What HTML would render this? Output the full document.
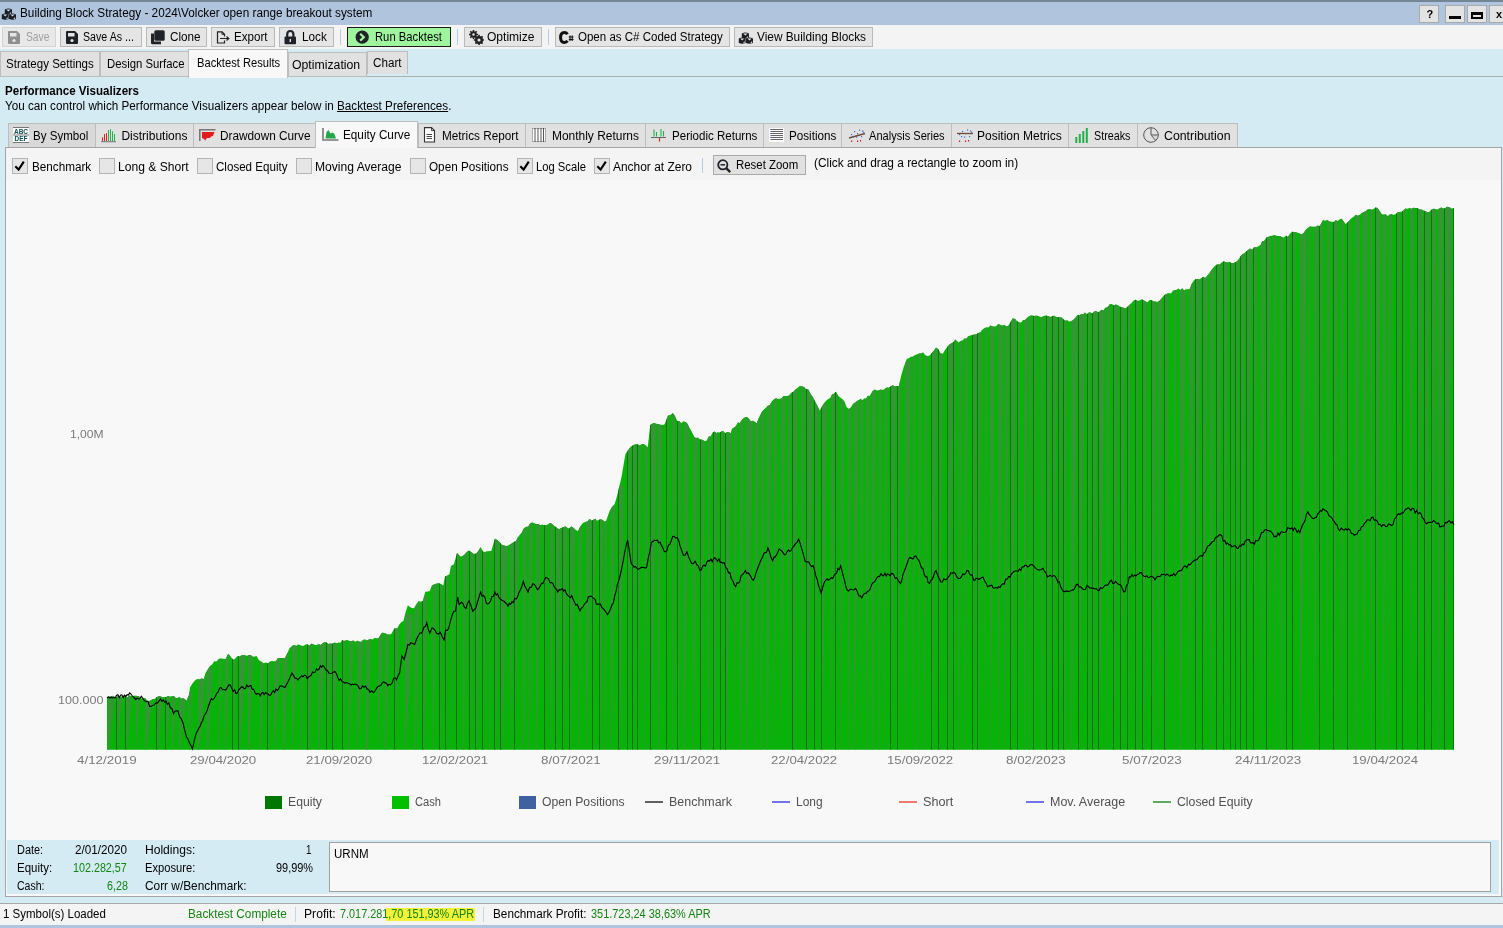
<!DOCTYPE html>
<html><head><meta charset="utf-8">
<style>
*{box-sizing:border-box}
html,body{margin:0;padding:0}
body{width:1503px;height:928px;overflow:hidden;position:relative;background:#d5ebf4;font-family:"Liberation Sans", sans-serif;font-size:12px;color:#000}
.a{position:absolute}
.t{position:absolute;white-space:pre;line-height:1;transform-origin:0 0}
#root{position:absolute;left:0;top:0;width:1503px;height:928px;will-change:transform}
.btn{position:absolute;background:#e5e5e5;border:1px solid #b9b9b9}
.tab{position:absolute;background:#e1e1e1;border:1px solid #bdbdbd;border-bottom:none}
.cb{position:absolute;width:16px;height:16px;background:#e6e6e6;border:1px solid #b4b4b4}
.sep{position:absolute;width:1px;background:#b8cde4}
svg{position:absolute;overflow:visible}
</style></head><body><div id="root">

<div class="a" style="left:0;top:0;width:1503px;height:2px;background:#748596"></div>
<div class="a" style="left:0;top:2px;width:1503px;height:23px;background:#b0c4de"></div>
<svg style="left:1px;top:7px" width="16" height="14"><path d="M3.8 2.4 Q7.4 0.7999999999999999 11.0 2.4 V6.7 Q7.4 8.1 3.8 6.7Z" fill="#1c1e22"/><path d="M5.199999999999999 2.5 H9.6 L7.4 4.5Z" fill="#c8daf0"/><path d="M8.4 6.5 L10.1 5.1 V6.4 L9.3 7.3Z" fill="#c8daf0"/><path d="M0.8 7.4 Q4.2 5.8 7.6 7.4 V12.0 Q4.2 13.4 0.8 12.0Z" fill="#1c1e22"/><path d="M2.2 7.5 H6.199999999999999 L4.2 9.5Z" fill="#c8daf0"/><path d="M5.2 11.8 L6.699999999999999 10.1 V11.4 L6.1 12.6Z" fill="#c8daf0"/><path d="M8 7.4 Q11.5 5.8 15 7.4 V12.0 Q11.5 13.4 8 12.0Z" fill="#1c1e22"/><path d="M9.4 7.5 H13.6 L11.5 9.5Z" fill="#c8daf0"/><path d="M12.5 11.8 L14.1 10.1 V11.4 L13.4 12.6Z" fill="#c8daf0"/></svg>
<div class="t" style="left:20.00px;top:7.14px;font-size:12px;transform:scaleX(0.9817);">Building Block Strategy - 2024\Volcker open range breakout system</div>
<div class="btn" style="left:1419px;top:5px;width:20px;height:18px;border-color:#a9a9a9;background:#e3e3e3"></div>
<div class="btn" style="left:1445px;top:5px;width:20px;height:18px;border-color:#a9a9a9;background:#e3e3e3"></div>
<div class="btn" style="left:1467px;top:5px;width:20px;height:18px;border-color:#a9a9a9;background:#e3e3e3"></div>
<div class="btn" style="left:1489px;top:5px;width:20px;height:18px;border-color:#a9a9a9;background:#e3e3e3"></div>
<div class="t" style="left:1426.50px;top:8.69px;font-size:11px;font-weight:bold;">?</div>
<div class="a" style="left:1449px;top:16px;width:12px;height:3px;background:#000"></div>
<div class="a" style="left:1471px;top:12px;width:12px;height:7px;border:solid #000;border-width:3px 2px 2px 2px"></div>
<div class="t" style="left:1496.00px;top:9.19px;font-size:11px;font-weight:bold;">x</div>
<div class="a" style="left:0;top:25px;width:1503px;height:24px;background:#f4f4f4"></div>
<div class="btn" style="left:2px;top:27px;width:54px;height:20px;background:#e8e8e8;border-color:#d4d4d4;"></div>
<div class="t" style="left:25.50px;top:30.94px;font-size:12px;color:#a0a0a0;transform:scaleX(0.8553);">Save</div>
<div class="btn" style="left:60px;top:27px;width:82px;height:20px;"></div>
<div class="t" style="left:83.20px;top:30.94px;font-size:12px;transform:scaleX(0.8871);">Save As ...</div>
<div class="btn" style="left:146px;top:27px;width:61px;height:20px;"></div>
<div class="t" style="left:169.60px;top:30.94px;font-size:12px;transform:scaleX(0.9758);">Clone</div>
<div class="btn" style="left:211px;top:27px;width:64px;height:20px;"></div>
<div class="t" style="left:234.30px;top:30.94px;font-size:12px;transform:scaleX(0.9658);">Export</div>
<div class="btn" style="left:279px;top:27px;width:55px;height:20px;"></div>
<div class="t" style="left:302.40px;top:30.94px;font-size:12px;transform:scaleX(0.9779);">Lock</div>
<div class="btn" style="left:347px;top:27px;width:104px;height:20px;background:#9ef59e;border-color:#1a1a1a;"></div>
<div class="t" style="left:374.60px;top:30.94px;font-size:12px;transform:scaleX(0.9373);">Run Backtest</div>
<div class="btn" style="left:464px;top:27px;width:78px;height:20px;"></div>
<div class="t" style="left:487.40px;top:30.94px;font-size:12px;transform:scaleX(1.0033);">Optimize</div>
<div class="btn" style="left:555px;top:27px;width:175px;height:20px;"></div>
<div class="t" style="left:578.00px;top:30.94px;font-size:12px;transform:scaleX(0.9604);">Open as C# Coded Strategy</div>
<div class="btn" style="left:734px;top:27px;width:139px;height:20px;"></div>
<div class="t" style="left:756.90px;top:30.94px;font-size:12px;transform:scaleX(0.9863);">View Building Blocks</div>
<div class="sep" style="left:340px;top:29px;height:16px"></div>
<div class="sep" style="left:457px;top:29px;height:16px"></div>
<div class="sep" style="left:548px;top:29px;height:16px"></div>
<svg style="left:8px;top:31px" width="12" height="13" viewBox="0 0 12 13"><path d="M1 0 H9 L12 3 V12 Q12 13 11 13 H1 Q0 13 0 12 V1 Q0 0 1 0Z" fill="#8f8f8f"/><rect x="2" y="2" width="6.5" height="3.5" fill="#e5e5e5"/><circle cx="6" cy="9.5" r="1.6" fill="#e5e5e5"/></svg>
<svg style="left:66px;top:31px" width="12" height="13" viewBox="0 0 12 13"><path d="M1 0 H9 L12 3 V12 Q12 13 11 13 H1 Q0 13 0 12 V1 Q0 0 1 0Z" fill="#1f2228"/><rect x="2" y="2" width="6.5" height="3.5" fill="#e5e5e5"/><circle cx="6" cy="9.5" r="1.6" fill="#e5e5e5"/></svg>
<svg style="left:151px;top:30px" width="14" height="15"><rect x="3.3" y="0.3" width="10.4" height="10.4" rx="1.5" fill="#1f2228"/><path d="M0 3.5 H3 V11.5 H10 V14.3 H1.5 Q0 14.3 0 12.8Z" fill="#1f2228"/></svg>
<svg style="left:216px;top:31px" width="15" height="13"><path d="M8.5 5.5 V3.3 L6 0.8 H1.5 V12 H8.5 V9.5" fill="none" stroke="#222" stroke-width="1.2"/><path d="M6 0.8 V3.3 H8.5" fill="none" stroke="#222" stroke-width="1"/><path d="M4 7.5 H12.5 M10.5 5.5 L12.8 7.5 L10.5 9.5" fill="none" stroke="#222" stroke-width="1.2"/></svg>
<svg style="left:284px;top:30px" width="13" height="15"><path d="M3.2 7 V4.5 Q3.2 1 6.3 1 Q9.4 1 9.4 4.5 V7" fill="none" stroke="#1f2228" stroke-width="2.2"/><rect x="0.5" y="6.5" width="11.5" height="7.8" rx="1" fill="#1f2228"/><rect x="5.6" y="9" width="1.4" height="3" fill="#e5e5e5"/></svg>
<svg style="left:355px;top:30px" width="15" height="15"><circle cx="7.2" cy="7.2" r="6.6" fill="#1f2228"/><path d="M5.2 3.8 L8.8 7.2 L5.2 10.6" fill="none" stroke="#9ef59e" stroke-width="2.2"/></svg>
<svg style="left:469px;top:30px" width="15" height="15" viewBox="0 0 15 15"><g fill="#222"><circle cx="4.5" cy="4.5" r="3.2"/><circle cx="10" cy="10" r="4"/></g><g stroke="#222" stroke-width="1.6"><path d="M4.5 0 V9 M0 4.5 H9 M1.3 1.3 L7.7 7.7 M7.7 1.3 L1.3 7.7"/><path d="M10 4.8 V15 M4.8 10 H15 M6.4 6.4 L13.6 13.6 M13.6 6.4 L6.4 13.6"/></g><circle cx="4.5" cy="4.5" r="1.2" fill="#e5e5e5"/><circle cx="10" cy="10" r="1.6" fill="#e5e5e5"/></svg>
<svg style="left:559px;top:31px" width="16" height="13"><path d="M8.5 3.2 Q7.5 1.5 5.2 1.5 Q1.6 1.5 1.6 6.5 Q1.6 11.5 5.2 11.5 Q7.5 11.5 8.5 9.8" fill="none" stroke="#111" stroke-width="3"/><path d="M11 4.5 V10 M13.2 4.5 V10 M9.8 6 H14.5 M9.8 8.5 H14.5" stroke="#111" stroke-width="1.1"/></svg>
<svg style="left:738px;top:31px" width="16" height="14"><path d="M3.8 2.4 Q7.4 0.7999999999999999 11.0 2.4 V6.7 Q7.4 8.1 3.8 6.7Z" fill="#1c1e22"/><path d="M5.199999999999999 2.5 H9.6 L7.4 4.5Z" fill="#e5e5e5"/><path d="M8.4 6.5 L10.1 5.1 V6.4 L9.3 7.3Z" fill="#e5e5e5"/><path d="M0.8 7.4 Q4.2 5.8 7.6 7.4 V12.0 Q4.2 13.4 0.8 12.0Z" fill="#1c1e22"/><path d="M2.2 7.5 H6.199999999999999 L4.2 9.5Z" fill="#e5e5e5"/><path d="M5.2 11.8 L6.699999999999999 10.1 V11.4 L6.1 12.6Z" fill="#e5e5e5"/><path d="M8 7.4 Q11.5 5.8 15 7.4 V12.0 Q11.5 13.4 8 12.0Z" fill="#1c1e22"/><path d="M9.4 7.5 H13.6 L11.5 9.5Z" fill="#e5e5e5"/><path d="M12.5 11.8 L14.1 10.1 V11.4 L13.4 12.6Z" fill="#e5e5e5"/></svg>
<div class="a" style="left:0;top:76px;width:1503px;height:1px;background:#b0b0b0"></div>
<div class="tab" style="left:0;top:51px;width:100px;height:26px;border-bottom:1px solid #bdbdbd"></div>
<div class="t" style="left:6.00px;top:57.84px;font-size:12px;transform:scaleX(0.9607);">Strategy Settings</div>
<div class="tab" style="left:100px;top:51px;width:89px;height:26px;border-bottom:1px solid #bdbdbd"></div>
<div class="t" style="left:106.50px;top:57.84px;font-size:12px;transform:scaleX(0.9446);">Design Surface</div>
<div class="tab" style="left:288px;top:52px;width:79px;height:25px;border-bottom:1px solid #bdbdbd"></div>
<div class="t" style="left:292.20px;top:59.34px;font-size:12px;transform:scaleX(1.0224);">Optimization</div>
<div class="tab" style="left:367px;top:51px;width:41px;height:23px"></div>
<div class="t" style="left:373.20px;top:57.34px;font-size:12px;transform:scaleX(0.9712);">Chart</div>
<div class="tab" style="left:188px;top:49px;width:100px;height:29px;background:#f8f8f8;border-color:#bdbdbd"></div>
<div class="t" style="left:196.50px;top:56.84px;font-size:12px;transform:scaleX(0.9309);">Backtest Results</div>
<div class="t" style="left:5.00px;top:85.34px;font-size:12px;font-weight:bold;transform:scaleX(0.9627);">Performance Visualizers</div>
<div class="t" style="left:5.00px;top:99.74px;font-size:12px;transform:scaleX(0.9741);">You can control which Performance Visualizers appear below in <span style="text-decoration:underline">Backtest Preferences</span>.</div>
<div class="a" style="left:5px;top:147px;width:1497px;height:750px;background:#f8f8f8;border:1px solid #a5a5a5"></div>
<div class="a" style="left:6px;top:148px;width:1495px;height:32px;background:#f4f4f4"></div>
<div class="tab" style="left:8px;top:123px;width:88px;height:24px;background:#d9d9d9"></div>
<div class="t" style="left:33.40px;top:129.54px;font-size:12px;transform:scaleX(0.9624);">By Symbol</div>
<div class="tab" style="left:95px;top:123px;width:99px;height:24px;background:#e1e1e1"></div>
<div class="t" style="left:121.40px;top:129.54px;font-size:12px;">Distributions</div>
<div class="tab" style="left:193px;top:123px;width:123px;height:24px;background:#e1e1e1"></div>
<div class="t" style="left:220.40px;top:129.54px;font-size:12px;transform:scaleX(0.9832);">Drawdown Curve</div>
<div class="tab" style="left:315px;top:121px;width:103px;height:27px;background:#f8f8f8"></div>
<div class="t" style="left:342.60px;top:128.54px;font-size:12px;transform:scaleX(0.9781);">Equity Curve</div>
<div class="tab" style="left:418px;top:123px;width:108px;height:24px;background:#e1e1e1"></div>
<div class="t" style="left:442.20px;top:129.54px;font-size:12px;transform:scaleX(0.9804);">Metrics Report</div>
<div class="tab" style="left:525px;top:123px;width:121px;height:24px;background:#e1e1e1"></div>
<div class="t" style="left:551.60px;top:129.54px;font-size:12px;transform:scaleX(0.9957);">Monthly Returns</div>
<div class="tab" style="left:645px;top:123px;width:119px;height:24px;background:#e1e1e1"></div>
<div class="t" style="left:671.50px;top:129.54px;font-size:12px;transform:scaleX(0.9626);">Periodic Returns</div>
<div class="tab" style="left:763px;top:123px;width:79px;height:24px;background:#e1e1e1"></div>
<div class="t" style="left:789.30px;top:129.54px;font-size:12px;transform:scaleX(0.9712);">Positions</div>
<div class="tab" style="left:841px;top:123px;width:111px;height:24px;background:#e1e1e1"></div>
<div class="t" style="left:869.40px;top:129.54px;font-size:12px;transform:scaleX(0.9216);">Analysis Series</div>
<div class="tab" style="left:951px;top:123px;width:118px;height:24px;background:#e1e1e1"></div>
<div class="t" style="left:977.00px;top:129.54px;font-size:12px;">Position Metrics</div>
<div class="tab" style="left:1068px;top:123px;width:70px;height:24px;background:#e1e1e1"></div>
<div class="t" style="left:1094.20px;top:129.54px;font-size:12px;transform:scaleX(0.8946);">Streaks</div>
<div class="tab" style="left:1137px;top:123px;width:101px;height:24px;background:#e1e1e1"></div>
<div class="t" style="left:1163.70px;top:129.54px;font-size:12px;transform:scaleX(1.0275);">Contribution</div>
<svg style="left:13px;top:127px" width="16" height="16"><rect x="0" y="0" width="16" height="16" fill="#fff"/><path d="M0 0.5 H16 M0 8 H16 M0 15.5 H16" stroke="#777" stroke-width="1"/><text x="8" y="7" font-family="Liberation Sans" font-size="6.5" font-weight="bold" fill="#0b4f4f" text-anchor="middle">ABC</text><text x="8" y="14" font-family="Liberation Sans" font-size="6.5" font-weight="bold" fill="#0b4f4f" text-anchor="middle">DEF</text></svg>
<svg style="left:101px;top:128px" width="16" height="15"><g fill="#e32020"><rect x="1" y="9.2" width="1" height="4"/><rect x="3" y="6" width="1" height="7.2"/><rect x="5" y="5.2" width="1" height="8"/></g><g fill="#1db34a"><rect x="7" y="2" width="1" height="11.2"/><rect x="9" y="1.2" width="1" height="12"/><rect x="11" y="3.2" width="1" height="10"/><rect x="13" y="6" width="1" height="7.2"/></g><rect x="0" y="13.3" width="15" height="0.9" fill="#666"/></svg>
<svg style="left:199px;top:129px" width="17" height="12"><path d="M0.8 12 V0.8 H16.5" fill="none" stroke="#777" stroke-width="1.6"/><path d="M3 3 H15.5 L14 7 L12 7.5 L11 9 L8 9 L6 11.5 L5 10 L3 9Z" fill="#e41b1b"/></svg>
<svg style="left:322px;top:128px" width="17" height="13"><path d="M1 0 V12 H16.5" fill="none" stroke="#777" stroke-width="1.6"/><path d="M3.5 10.5 L4.5 4 L6.5 2 L8.5 5.5 L10.5 4.5 L12.5 6 L14 10.5Z" fill="#22a84a"/></svg>
<svg style="left:423px;top:127px" width="13" height="16"><path d="M1.5 0.6 H8.5 L11.5 3.6 V15 H1.5Z" fill="#fff" stroke="#333" stroke-width="1.1"/><path d="M8.5 0.6 V3.6 H11.5" fill="none" stroke="#333" stroke-width="0.9"/><path d="M3.5 7.5 H9 M3.5 9.5 H9 M3.5 11.5 H9" stroke="#333" stroke-width="0.9"/></svg>
<svg style="left:532px;top:128px" width="14" height="14"><rect x="0.5" y="0.5" width="13" height="13" fill="#fff" stroke="#999" stroke-width="0.8"/><path d="M3 0 V14 M6 0 V14 M9 0 V14 M11.5 0 V14" stroke="#444" stroke-width="0.9"/></svg>
<svg style="left:651px;top:128px" width="15" height="14"><path d="M3 1.5 V8.5 M5.5 4 V8.5 M10 1 V8.5 M12.5 3 V8.5" stroke="#1db34a" stroke-width="1.1"/><path d="M0 9.5 H15" stroke="#666" stroke-width="1"/><path d="M8.5 10 V13.5" stroke="#e01f1f" stroke-width="1.2"/></svg>
<svg style="left:769px;top:128px" width="15" height="14"><rect x="0" y="0" width="15" height="14" fill="#fff"/><path d="M1.5 1.5 H14 M1.5 3.5 H14 M1.5 5.5 H14 M1.5 7.5 H14 M1.5 9.5 H14 M1.5 11.5 H14" stroke="#555" stroke-width="0.9"/><path d="M1.5 1.5 H2.5 M1.5 5.5 H2.5 M1.5 9.5 H2.5" stroke="#3355ff" stroke-width="1"/></svg>
<svg style="left:849px;top:127.5px" width="17" height="15"><rect x="2" y="6" width="1.2" height="1.2" fill="#3a70c8"/><rect x="5" y="3" width="1.2" height="1.2" fill="#3a70c8"/><rect x="8" y="5" width="1.2" height="1.2" fill="#3a70c8"/><rect x="10" y="1.5" width="1.2" height="1.2" fill="#3a70c8"/><rect x="13" y="2.5" width="1.2" height="1.2" fill="#3a70c8"/><rect x="7" y="8.5" width="1.2" height="1.2" fill="#3a70c8"/><rect x="12" y="8" width="1.2" height="1.2" fill="#3a70c8"/><rect x="14" y="3.5" width="1.2" height="1.2" fill="#3a70c8"/><rect x="4" y="8" width="1.2" height="1.2" fill="#3a70c8"/><path d="M0 10 L16 5.5" stroke="#6e4a3a" stroke-width="1.3"/><rect x="2" y="12.5" width="1.2" height="1.5" fill="#c01f2f"/><rect x="8" y="12.5" width="1.2" height="1.5" fill="#c01f2f"/><rect x="11" y="12" width="1.2" height="1.5" fill="#c01f2f"/></svg>
<svg style="left:957px;top:127.5px" width="17" height="15"><rect x="2" y="6" width="1.2" height="1.2" fill="#3a70c8"/><rect x="5" y="3" width="1.2" height="1.2" fill="#3a70c8"/><rect x="8" y="5" width="1.2" height="1.2" fill="#3a70c8"/><rect x="10" y="1.5" width="1.2" height="1.2" fill="#3a70c8"/><rect x="13" y="2.5" width="1.2" height="1.2" fill="#3a70c8"/><rect x="7" y="8.5" width="1.2" height="1.2" fill="#3a70c8"/><rect x="12" y="8" width="1.2" height="1.2" fill="#3a70c8"/><rect x="14" y="3.5" width="1.2" height="1.2" fill="#3a70c8"/><rect x="4" y="8" width="1.2" height="1.2" fill="#3a70c8"/><path d="M0 5.5 H16" stroke="#6e4a3a" stroke-width="1.3"/><rect x="2" y="12.5" width="1.2" height="1.5" fill="#c01f2f"/><rect x="8" y="12.5" width="1.2" height="1.5" fill="#c01f2f"/><rect x="11" y="12" width="1.2" height="1.5" fill="#c01f2f"/></svg>
<svg style="left:1075px;top:128px" width="14" height="15"><path d="M1.3 15 V9 M4.8 15 V6 M8.3 15 V3 M11.8 15 V0" stroke="#22b04a" stroke-width="2"/></svg>
<svg style="left:1143px;top:127px" width="17" height="16"><circle cx="8" cy="8" r="7.3" fill="none" stroke="#555" stroke-width="1"/><path d="M8 0.7 V8 H15.3 M8 8 L12.8 13.6" fill="none" stroke="#555" stroke-width="1"/><path d="M8.5 8.5 H15" stroke="#999" stroke-width="1.4"/></svg>
<div class="cb" style="left:12px;top:158px"></div>
<svg style="left:12px;top:158px" width="16" height="16"><path d="M3.3 8.3 L6.6 11.6 L11.8 3.6" stroke="#000" stroke-width="2.1" fill="none"/></svg>
<div class="t" style="left:31.60px;top:161.34px;font-size:12px;transform:scaleX(0.9752);">Benchmark</div>
<div class="cb" style="left:99px;top:158px"></div>
<div class="t" style="left:118.00px;top:161.34px;font-size:12px;transform:scaleX(1.0077);">Long &amp; Short</div>
<div class="cb" style="left:197px;top:158px"></div>
<div class="t" style="left:216.20px;top:161.34px;font-size:12px;transform:scaleX(0.9656);">Closed Equity</div>
<div class="cb" style="left:296px;top:158px"></div>
<div class="t" style="left:315.30px;top:161.34px;font-size:12px;transform:scaleX(1.0076);">Moving Average</div>
<div class="cb" style="left:410px;top:158px"></div>
<div class="t" style="left:429.30px;top:161.34px;font-size:12px;transform:scaleX(0.9768);">Open Positions</div>
<div class="cb" style="left:517px;top:158px"></div>
<svg style="left:517px;top:158px" width="16" height="16"><path d="M3.3 8.3 L6.6 11.6 L11.8 3.6" stroke="#000" stroke-width="2.1" fill="none"/></svg>
<div class="t" style="left:535.80px;top:161.34px;font-size:12px;transform:scaleX(0.9349);">Log Scale</div>
<div class="cb" style="left:594px;top:158px"></div>
<svg style="left:594px;top:158px" width="16" height="16"><path d="M3.3 8.3 L6.6 11.6 L11.8 3.6" stroke="#000" stroke-width="2.1" fill="none"/></svg>
<div class="t" style="left:613.00px;top:161.34px;font-size:12px;transform:scaleX(0.9953);">Anchor at Zero</div>
<div class="sep" style="left:702px;top:158px;height:15px"></div>
<div class="btn" style="left:713px;top:155px;width:93px;height:20px;background:#e1e1e1;border-color:#a9a9a9"></div>
<svg style="left:717px;top:159px" width="15" height="14"><circle cx="5.8" cy="5.8" r="4.6" fill="none" stroke="#1f2228" stroke-width="1.8"/><path d="M3.5 5.8 H8.1" stroke="#1f2228" stroke-width="1.5"/><path d="M9.2 9.2 L13.2 13.2" stroke="#1f2228" stroke-width="2.4"/></svg>
<div class="t" style="left:736.20px;top:159.44px;font-size:12px;transform:scaleX(0.9517);">Reset Zoom</div>
<div class="t" style="left:814.20px;top:156.84px;font-size:12px;transform:scaleX(0.9903);">(Click and drag a rectangle to zoom in)</div>
<svg style="left:0;top:0" width="1503" height="928">
<defs><clipPath id="eqc"><polygon points="107.0,697.0 108.8,696.5 110.7,696.8 112.5,695.7 114.4,696.8 116.2,697.2 118.1,696.3 119.9,696.8 121.8,696.7 123.6,695.6 125.5,695.8 127.3,697.4 129.2,695.6 131.0,696.0 133.0,696.1 135.0,695.5 137.0,696.1 139.0,696.3 141.0,698.5 143.0,698.3 145.0,698.0 147.0,700.6 148.9,700.9 150.7,700.6 152.6,698.9 154.4,699.1 156.3,697.4 158.1,696.4 160.0,696.0 162.0,697.2 164.0,697.0 166.0,697.2 168.0,696.0 170.0,696.7 172.0,696.0 173.8,696.1 175.7,698.0 177.5,698.1 179.3,696.8 181.2,698.8 183.0,698.0 186.5,700.6 189.0,694.6 190.0,687.5 192.3,683.8 194.7,680.8 197.0,679.0 199.3,679.6 201.7,678.5 204.0,679.0 205.5,673.0 207.8,669.6 210.0,666.0 212.1,664.6 214.2,661.3 216.4,661.4 218.5,659.0 220.9,658.4 223.3,658.8 225.7,659.0 228.0,654.0 230.0,655.6 232.0,658.6 234.0,660.0 237.5,656.0 239.4,656.6 241.3,655.4 243.2,655.0 245.1,655.5 247.0,655.8 248.9,654.9 250.8,655.1 252.7,656.7 254.6,656.5 256.5,656.0 258.8,660.0 261.0,661.5 263.5,663.3 266.0,662.6 267.9,663.4 269.8,661.8 271.7,661.1 273.6,661.2 275.5,661.5 278.0,658.0 280.3,657.9 282.7,658.1 285.0,658.0 287.4,653.1 289.7,648.0 292.0,646.1 294.4,645.0 296.3,645.9 298.1,644.4 300.0,644.9 301.9,646.0 303.7,645.8 305.6,644.5 307.4,644.3 309.3,645.8 311.2,643.7 313.0,644.0 314.9,645.1 316.8,645.1 318.6,644.1 320.5,645.0 323.0,643.0 324.8,642.0 326.6,642.5 328.4,644.1 330.2,643.5 332.0,643.7 334.8,642.5 336.6,643.4 338.5,642.6 340.3,642.8 342.2,640.1 344.0,641.0 345.9,640.3 347.8,640.0 349.7,641.2 351.6,641.0 353.4,640.4 355.3,641.8 357.2,640.7 359.1,641.4 361.0,642.0 363.0,640.0 364.9,639.2 366.9,640.5 368.8,639.4 370.8,638.9 372.7,639.4 374.7,637.7 376.6,638.3 378.6,638.0 382.0,632.5 383.9,633.1 385.7,633.5 387.6,634.4 389.4,634.4 391.3,633.9 394.3,628.6 397.3,628.6 399.6,624.1 401.5,621.9 403.4,621.1 405.6,612.2 407.9,605.2 409.9,606.9 411.9,608.0 413.9,608.3 416.2,604.7 418.5,601.0 420.8,601.7 423.0,600.7 425.2,591.7 427.5,591.4 429.8,590.9 432.0,585.3 434.1,584.4 436.1,583.7 438.2,582.9 440.3,583.8 443.3,585.6 444.9,576.6 447.1,575.8 449.4,574.3 450.9,566.0 453.9,564.5 457.0,553.0 460.5,556.5 462.6,556.1 464.6,554.6 466.7,552.0 468.8,550.6 471.2,552.1 473.5,553.8 475.9,553.7 478.2,551.2 480.6,547.0 483.0,551.8 485.1,551.9 487.1,551.2 489.2,551.2 491.3,551.0 494.9,538.7 497.3,539.9 499.6,542.1 502.0,545.0 504.3,545.5 506.7,546.3 509.0,545.0 511.3,543.8 513.7,542.1 516.0,541.0 517.8,537.6 519.6,534.9 521.5,532.8 523.3,529.0 525.7,527.0 528.0,526.4 530.4,523.3 532.4,522.6 534.4,523.2 536.3,524.0 538.3,523.9 540.3,525.2 542.3,524.5 544.2,525.2 546.1,525.3 548.0,524.4 549.9,522.7 551.8,523.8 554.2,525.8 556.5,527.5 558.9,529.2 561.2,528.0 563.6,526.9 565.5,526.5 567.4,527.7 569.2,528.4 571.1,526.4 573.0,527.6 575.5,529.7 577.9,530.9 580.2,526.8 582.6,523.3 585.0,521.9 587.3,521.5 589.7,519.0 591.6,520.4 593.4,519.7 595.3,518.7 597.1,520.7 599.0,519.8 600.8,519.3 602.6,520.1 604.5,521.6 606.3,521.0 608.1,515.2 609.9,510.3 612.2,506.7 614.6,504.3 617.0,496.0 619.3,486.5 621.7,475.9 625.3,454.5 627.3,451.3 629.2,448.7 631.2,446.2 633.3,445.2 635.5,444.3 637.6,444.2 639.8,445.6 641.9,443.9 643.9,444.0 645.8,445.5 647.8,447.4 650.2,424.9 652.1,423.7 654.1,423.0 656.0,423.7 658.1,423.9 660.2,424.7 662.3,425.1 664.4,424.4 666.2,420.2 668.0,415.4 670.4,415.0 672.7,413.0 675.0,415.9 677.4,421.3 679.3,421.1 681.2,423.2 683.2,421.2 685.1,422.1 687.0,423.0 689.3,427.6 691.7,431.6 694.0,436.8 696.0,437.9 698.0,437.5 700.0,439.6 702.4,439.7 704.8,441.2 706.7,440.4 708.7,436.4 710.6,436.4 712.6,432.6 714.5,431.5 716.3,433.0 718.1,432.3 719.9,432.4 721.7,431.3 723.5,431.3 725.3,433.3 727.1,432.0 728.9,432.2 730.7,433.2 732.3,428.3 734.2,427.5 736.0,426.0 737.9,422.3 739.7,423.0 741.6,420.3 743.4,418.3 745.3,417.0 747.2,417.1 749.1,418.9 751.0,421.5 752.8,420.8 754.7,421.5 756.6,423.5 759.8,415.4 761.8,412.1 763.8,409.6 765.9,407.7 767.9,405.7 769.9,404.9 772.0,400.9 774.0,399.3 776.0,398.2 777.9,399.0 779.8,398.8 781.6,398.3 783.5,396.1 785.4,396.0 787.3,396.0 789.3,395.5 791.3,392.7 793.4,391.7 795.4,389.5 797.5,387.9 799.7,386.1 801.8,386.3 804.0,387.0 806.1,389.1 808.3,389.5 810.8,394.3 813.2,397.6 815.3,402.1 817.5,406.1 819.6,410.5 822.0,406.5 824.5,402.4 826.4,400.5 828.3,399.0 830.1,398.0 832.0,394.6 833.9,393.8 835.8,391.8 838.0,395.4 840.1,397.6 842.3,399.2 844.4,401.6 846.6,406.9 848.7,408.9 850.9,407.6 853.0,403.7 855.2,402.4 857.0,401.0 858.8,400.0 860.6,398.8 862.5,400.4 864.3,398.2 866.1,398.6 867.9,395.8 869.7,396.0 872.2,391.5 874.6,389.5 876.7,390.5 878.9,390.3 881.0,389.5 883.0,390.1 884.9,388.7 886.9,387.6 888.8,387.6 890.8,386.3 892.8,385.2 894.8,386.4 896.8,386.1 898.8,386.3 901.2,375.7 903.7,366.9 906.9,358.8 908.9,358.2 910.9,356.7 912.9,356.4 915.0,355.2 917.0,354.3 919.0,353.6 921.0,353.4 923.0,352.3 925.5,355.5 927.9,356.2 929.9,355.2 932.0,352.8 934.0,350.5 936.0,347.5 938.2,349.1 940.3,353.1 942.5,354.0 945.7,349.0 947.6,346.5 949.6,344.2 951.5,343.2 953.5,341.9 955.4,339.4 958.7,342.6 960.6,340.9 962.5,340.4 964.5,338.2 966.4,338.7 968.3,336.2 970.2,335.4 972.2,334.9 974.1,334.4 976.1,334.6 978.0,333.0 980.2,332.6 982.3,329.7 984.5,328.0 986.4,327.4 988.4,327.5 990.3,325.6 992.2,326.2 994.2,326.8 996.1,326.2 998.1,324.0 1000.0,324.7 1002.1,325.8 1004.3,324.8 1006.5,326.6 1008.6,325.6 1010.8,321.6 1012.9,318.3 1015.1,319.0 1017.2,321.3 1019.4,322.6 1021.2,322.4 1023.0,320.1 1024.8,320.1 1026.6,318.5 1028.4,316.5 1030.2,315.7 1032.0,315.3 1033.9,315.9 1035.7,315.7 1037.6,315.7 1039.4,316.6 1041.3,317.2 1043.1,316.6 1044.9,315.5 1046.8,315.8 1048.6,316.3 1050.5,317.0 1052.3,315.9 1054.2,315.8 1056.0,317.0 1057.9,317.1 1059.8,317.5 1061.6,317.4 1063.5,319.3 1065.4,320.8 1067.2,320.3 1069.1,321.4 1071.0,321.3 1073.2,320.0 1075.4,317.8 1077.6,314.8 1079.4,315.6 1081.3,314.0 1083.1,314.4 1085.0,312.6 1086.8,314.3 1088.7,312.6 1090.5,312.6 1092.3,313.4 1094.2,311.5 1096.0,310.9 1097.9,312.3 1099.7,311.4 1101.6,309.7 1103.4,310.5 1105.6,307.6 1107.7,306.9 1109.8,304.3 1112.0,304.0 1113.9,305.5 1115.7,304.4 1117.6,305.3 1119.4,306.2 1121.3,307.2 1123.1,307.6 1125.0,308.4 1127.2,307.0 1129.3,305.3 1131.5,303.0 1133.6,300.4 1135.8,299.7 1137.8,301.1 1139.7,300.6 1141.7,299.2 1143.6,300.3 1145.6,301.4 1147.5,302.2 1149.5,300.0 1151.4,300.0 1153.4,301.4 1155.3,301.5 1157.3,301.9 1159.5,300.8 1161.6,298.4 1163.8,295.4 1165.6,294.2 1167.5,293.6 1169.3,293.2 1171.2,293.2 1173.0,290.6 1174.9,290.3 1176.7,289.8 1178.6,288.6 1180.4,289.9 1182.3,288.2 1184.1,290.5 1186.0,289.3 1187.8,289.3 1189.7,289.0 1191.8,283.6 1194.0,280.3 1195.9,279.0 1197.7,279.0 1199.6,279.4 1201.4,277.9 1203.3,276.7 1205.1,277.9 1207.0,276.0 1209.1,273.6 1211.3,270.3 1213.4,267.4 1215.6,265.3 1217.7,264.3 1219.8,264.5 1222.0,262.2 1223.9,261.2 1225.7,262.3 1227.6,262.5 1229.4,261.8 1231.3,262.9 1233.1,263.3 1235.0,262.2 1236.8,261.4 1238.7,259.4 1240.5,256.3 1242.3,254.2 1244.1,253.5 1246.0,251.4 1247.8,250.2 1250.0,248.5 1252.1,249.4 1254.3,246.9 1256.4,247.6 1258.6,245.9 1260.4,245.0 1262.3,240.9 1264.2,240.9 1266.0,237.8 1268.0,237.1 1270.0,236.3 1272.0,235.8 1274.0,235.0 1276.0,235.8 1278.0,236.0 1280.0,235.9 1282.0,237.3 1283.9,237.5 1285.9,235.6 1287.9,237.0 1289.9,234.1 1291.9,231.8 1293.9,232.1 1295.9,232.1 1297.8,232.8 1299.8,233.4 1301.8,234.6 1303.8,232.8 1305.8,229.7 1307.8,227.8 1309.8,226.5 1311.8,226.4 1313.8,226.7 1315.8,226.7 1317.8,225.6 1319.8,225.9 1323.0,219.9 1325.1,220.8 1327.3,220.0 1329.4,221.5 1331.6,221.8 1333.7,221.9 1335.7,220.3 1337.7,221.0 1339.7,219.2 1341.7,218.7 1343.7,221.4 1345.7,223.9 1347.7,222.2 1349.6,220.2 1351.6,217.9 1353.6,216.8 1355.6,214.8 1357.6,215.8 1359.6,215.0 1361.6,213.1 1363.6,212.1 1365.6,211.3 1367.6,209.5 1369.6,209.1 1371.6,209.8 1373.5,209.0 1375.5,207.5 1377.5,207.9 1379.5,211.0 1381.5,213.7 1383.5,214.7 1385.5,214.3 1387.5,216.0 1389.5,214.7 1391.5,213.9 1393.5,214.7 1395.5,214.3 1397.4,212.4 1399.4,211.9 1401.4,211.7 1403.4,210.5 1405.4,208.5 1407.4,208.8 1409.4,207.9 1411.4,208.8 1413.4,207.8 1415.4,208.0 1417.4,207.9 1419.4,209.6 1421.4,209.4 1423.3,210.3 1425.3,211.3 1427.3,211.9 1429.3,212.0 1431.3,209.7 1433.3,208.7 1435.3,209.1 1437.3,209.4 1439.3,208.4 1441.3,207.4 1443.3,208.5 1445.3,208.1 1447.3,206.7 1449.5,207.2 1451.8,208.8 1454.0,208.0 1454,749.7 107,749.7"/></clipPath></defs>
<polygon points="107.0,697.0 108.8,696.5 110.7,696.8 112.5,695.7 114.4,696.8 116.2,697.2 118.1,696.3 119.9,696.8 121.8,696.7 123.6,695.6 125.5,695.8 127.3,697.4 129.2,695.6 131.0,696.0 133.0,696.1 135.0,695.5 137.0,696.1 139.0,696.3 141.0,698.5 143.0,698.3 145.0,698.0 147.0,700.6 148.9,700.9 150.7,700.6 152.6,698.9 154.4,699.1 156.3,697.4 158.1,696.4 160.0,696.0 162.0,697.2 164.0,697.0 166.0,697.2 168.0,696.0 170.0,696.7 172.0,696.0 173.8,696.1 175.7,698.0 177.5,698.1 179.3,696.8 181.2,698.8 183.0,698.0 186.5,700.6 189.0,694.6 190.0,687.5 192.3,683.8 194.7,680.8 197.0,679.0 199.3,679.6 201.7,678.5 204.0,679.0 205.5,673.0 207.8,669.6 210.0,666.0 212.1,664.6 214.2,661.3 216.4,661.4 218.5,659.0 220.9,658.4 223.3,658.8 225.7,659.0 228.0,654.0 230.0,655.6 232.0,658.6 234.0,660.0 237.5,656.0 239.4,656.6 241.3,655.4 243.2,655.0 245.1,655.5 247.0,655.8 248.9,654.9 250.8,655.1 252.7,656.7 254.6,656.5 256.5,656.0 258.8,660.0 261.0,661.5 263.5,663.3 266.0,662.6 267.9,663.4 269.8,661.8 271.7,661.1 273.6,661.2 275.5,661.5 278.0,658.0 280.3,657.9 282.7,658.1 285.0,658.0 287.4,653.1 289.7,648.0 292.0,646.1 294.4,645.0 296.3,645.9 298.1,644.4 300.0,644.9 301.9,646.0 303.7,645.8 305.6,644.5 307.4,644.3 309.3,645.8 311.2,643.7 313.0,644.0 314.9,645.1 316.8,645.1 318.6,644.1 320.5,645.0 323.0,643.0 324.8,642.0 326.6,642.5 328.4,644.1 330.2,643.5 332.0,643.7 334.8,642.5 336.6,643.4 338.5,642.6 340.3,642.8 342.2,640.1 344.0,641.0 345.9,640.3 347.8,640.0 349.7,641.2 351.6,641.0 353.4,640.4 355.3,641.8 357.2,640.7 359.1,641.4 361.0,642.0 363.0,640.0 364.9,639.2 366.9,640.5 368.8,639.4 370.8,638.9 372.7,639.4 374.7,637.7 376.6,638.3 378.6,638.0 382.0,632.5 383.9,633.1 385.7,633.5 387.6,634.4 389.4,634.4 391.3,633.9 394.3,628.6 397.3,628.6 399.6,624.1 401.5,621.9 403.4,621.1 405.6,612.2 407.9,605.2 409.9,606.9 411.9,608.0 413.9,608.3 416.2,604.7 418.5,601.0 420.8,601.7 423.0,600.7 425.2,591.7 427.5,591.4 429.8,590.9 432.0,585.3 434.1,584.4 436.1,583.7 438.2,582.9 440.3,583.8 443.3,585.6 444.9,576.6 447.1,575.8 449.4,574.3 450.9,566.0 453.9,564.5 457.0,553.0 460.5,556.5 462.6,556.1 464.6,554.6 466.7,552.0 468.8,550.6 471.2,552.1 473.5,553.8 475.9,553.7 478.2,551.2 480.6,547.0 483.0,551.8 485.1,551.9 487.1,551.2 489.2,551.2 491.3,551.0 494.9,538.7 497.3,539.9 499.6,542.1 502.0,545.0 504.3,545.5 506.7,546.3 509.0,545.0 511.3,543.8 513.7,542.1 516.0,541.0 517.8,537.6 519.6,534.9 521.5,532.8 523.3,529.0 525.7,527.0 528.0,526.4 530.4,523.3 532.4,522.6 534.4,523.2 536.3,524.0 538.3,523.9 540.3,525.2 542.3,524.5 544.2,525.2 546.1,525.3 548.0,524.4 549.9,522.7 551.8,523.8 554.2,525.8 556.5,527.5 558.9,529.2 561.2,528.0 563.6,526.9 565.5,526.5 567.4,527.7 569.2,528.4 571.1,526.4 573.0,527.6 575.5,529.7 577.9,530.9 580.2,526.8 582.6,523.3 585.0,521.9 587.3,521.5 589.7,519.0 591.6,520.4 593.4,519.7 595.3,518.7 597.1,520.7 599.0,519.8 600.8,519.3 602.6,520.1 604.5,521.6 606.3,521.0 608.1,515.2 609.9,510.3 612.2,506.7 614.6,504.3 617.0,496.0 619.3,486.5 621.7,475.9 625.3,454.5 627.3,451.3 629.2,448.7 631.2,446.2 633.3,445.2 635.5,444.3 637.6,444.2 639.8,445.6 641.9,443.9 643.9,444.0 645.8,445.5 647.8,447.4 650.2,424.9 652.1,423.7 654.1,423.0 656.0,423.7 658.1,423.9 660.2,424.7 662.3,425.1 664.4,424.4 666.2,420.2 668.0,415.4 670.4,415.0 672.7,413.0 675.0,415.9 677.4,421.3 679.3,421.1 681.2,423.2 683.2,421.2 685.1,422.1 687.0,423.0 689.3,427.6 691.7,431.6 694.0,436.8 696.0,437.9 698.0,437.5 700.0,439.6 702.4,439.7 704.8,441.2 706.7,440.4 708.7,436.4 710.6,436.4 712.6,432.6 714.5,431.5 716.3,433.0 718.1,432.3 719.9,432.4 721.7,431.3 723.5,431.3 725.3,433.3 727.1,432.0 728.9,432.2 730.7,433.2 732.3,428.3 734.2,427.5 736.0,426.0 737.9,422.3 739.7,423.0 741.6,420.3 743.4,418.3 745.3,417.0 747.2,417.1 749.1,418.9 751.0,421.5 752.8,420.8 754.7,421.5 756.6,423.5 759.8,415.4 761.8,412.1 763.8,409.6 765.9,407.7 767.9,405.7 769.9,404.9 772.0,400.9 774.0,399.3 776.0,398.2 777.9,399.0 779.8,398.8 781.6,398.3 783.5,396.1 785.4,396.0 787.3,396.0 789.3,395.5 791.3,392.7 793.4,391.7 795.4,389.5 797.5,387.9 799.7,386.1 801.8,386.3 804.0,387.0 806.1,389.1 808.3,389.5 810.8,394.3 813.2,397.6 815.3,402.1 817.5,406.1 819.6,410.5 822.0,406.5 824.5,402.4 826.4,400.5 828.3,399.0 830.1,398.0 832.0,394.6 833.9,393.8 835.8,391.8 838.0,395.4 840.1,397.6 842.3,399.2 844.4,401.6 846.6,406.9 848.7,408.9 850.9,407.6 853.0,403.7 855.2,402.4 857.0,401.0 858.8,400.0 860.6,398.8 862.5,400.4 864.3,398.2 866.1,398.6 867.9,395.8 869.7,396.0 872.2,391.5 874.6,389.5 876.7,390.5 878.9,390.3 881.0,389.5 883.0,390.1 884.9,388.7 886.9,387.6 888.8,387.6 890.8,386.3 892.8,385.2 894.8,386.4 896.8,386.1 898.8,386.3 901.2,375.7 903.7,366.9 906.9,358.8 908.9,358.2 910.9,356.7 912.9,356.4 915.0,355.2 917.0,354.3 919.0,353.6 921.0,353.4 923.0,352.3 925.5,355.5 927.9,356.2 929.9,355.2 932.0,352.8 934.0,350.5 936.0,347.5 938.2,349.1 940.3,353.1 942.5,354.0 945.7,349.0 947.6,346.5 949.6,344.2 951.5,343.2 953.5,341.9 955.4,339.4 958.7,342.6 960.6,340.9 962.5,340.4 964.5,338.2 966.4,338.7 968.3,336.2 970.2,335.4 972.2,334.9 974.1,334.4 976.1,334.6 978.0,333.0 980.2,332.6 982.3,329.7 984.5,328.0 986.4,327.4 988.4,327.5 990.3,325.6 992.2,326.2 994.2,326.8 996.1,326.2 998.1,324.0 1000.0,324.7 1002.1,325.8 1004.3,324.8 1006.5,326.6 1008.6,325.6 1010.8,321.6 1012.9,318.3 1015.1,319.0 1017.2,321.3 1019.4,322.6 1021.2,322.4 1023.0,320.1 1024.8,320.1 1026.6,318.5 1028.4,316.5 1030.2,315.7 1032.0,315.3 1033.9,315.9 1035.7,315.7 1037.6,315.7 1039.4,316.6 1041.3,317.2 1043.1,316.6 1044.9,315.5 1046.8,315.8 1048.6,316.3 1050.5,317.0 1052.3,315.9 1054.2,315.8 1056.0,317.0 1057.9,317.1 1059.8,317.5 1061.6,317.4 1063.5,319.3 1065.4,320.8 1067.2,320.3 1069.1,321.4 1071.0,321.3 1073.2,320.0 1075.4,317.8 1077.6,314.8 1079.4,315.6 1081.3,314.0 1083.1,314.4 1085.0,312.6 1086.8,314.3 1088.7,312.6 1090.5,312.6 1092.3,313.4 1094.2,311.5 1096.0,310.9 1097.9,312.3 1099.7,311.4 1101.6,309.7 1103.4,310.5 1105.6,307.6 1107.7,306.9 1109.8,304.3 1112.0,304.0 1113.9,305.5 1115.7,304.4 1117.6,305.3 1119.4,306.2 1121.3,307.2 1123.1,307.6 1125.0,308.4 1127.2,307.0 1129.3,305.3 1131.5,303.0 1133.6,300.4 1135.8,299.7 1137.8,301.1 1139.7,300.6 1141.7,299.2 1143.6,300.3 1145.6,301.4 1147.5,302.2 1149.5,300.0 1151.4,300.0 1153.4,301.4 1155.3,301.5 1157.3,301.9 1159.5,300.8 1161.6,298.4 1163.8,295.4 1165.6,294.2 1167.5,293.6 1169.3,293.2 1171.2,293.2 1173.0,290.6 1174.9,290.3 1176.7,289.8 1178.6,288.6 1180.4,289.9 1182.3,288.2 1184.1,290.5 1186.0,289.3 1187.8,289.3 1189.7,289.0 1191.8,283.6 1194.0,280.3 1195.9,279.0 1197.7,279.0 1199.6,279.4 1201.4,277.9 1203.3,276.7 1205.1,277.9 1207.0,276.0 1209.1,273.6 1211.3,270.3 1213.4,267.4 1215.6,265.3 1217.7,264.3 1219.8,264.5 1222.0,262.2 1223.9,261.2 1225.7,262.3 1227.6,262.5 1229.4,261.8 1231.3,262.9 1233.1,263.3 1235.0,262.2 1236.8,261.4 1238.7,259.4 1240.5,256.3 1242.3,254.2 1244.1,253.5 1246.0,251.4 1247.8,250.2 1250.0,248.5 1252.1,249.4 1254.3,246.9 1256.4,247.6 1258.6,245.9 1260.4,245.0 1262.3,240.9 1264.2,240.9 1266.0,237.8 1268.0,237.1 1270.0,236.3 1272.0,235.8 1274.0,235.0 1276.0,235.8 1278.0,236.0 1280.0,235.9 1282.0,237.3 1283.9,237.5 1285.9,235.6 1287.9,237.0 1289.9,234.1 1291.9,231.8 1293.9,232.1 1295.9,232.1 1297.8,232.8 1299.8,233.4 1301.8,234.6 1303.8,232.8 1305.8,229.7 1307.8,227.8 1309.8,226.5 1311.8,226.4 1313.8,226.7 1315.8,226.7 1317.8,225.6 1319.8,225.9 1323.0,219.9 1325.1,220.8 1327.3,220.0 1329.4,221.5 1331.6,221.8 1333.7,221.9 1335.7,220.3 1337.7,221.0 1339.7,219.2 1341.7,218.7 1343.7,221.4 1345.7,223.9 1347.7,222.2 1349.6,220.2 1351.6,217.9 1353.6,216.8 1355.6,214.8 1357.6,215.8 1359.6,215.0 1361.6,213.1 1363.6,212.1 1365.6,211.3 1367.6,209.5 1369.6,209.1 1371.6,209.8 1373.5,209.0 1375.5,207.5 1377.5,207.9 1379.5,211.0 1381.5,213.7 1383.5,214.7 1385.5,214.3 1387.5,216.0 1389.5,214.7 1391.5,213.9 1393.5,214.7 1395.5,214.3 1397.4,212.4 1399.4,211.9 1401.4,211.7 1403.4,210.5 1405.4,208.5 1407.4,208.8 1409.4,207.9 1411.4,208.8 1413.4,207.8 1415.4,208.0 1417.4,207.9 1419.4,209.6 1421.4,209.4 1423.3,210.3 1425.3,211.3 1427.3,211.9 1429.3,212.0 1431.3,209.7 1433.3,208.7 1435.3,209.1 1437.3,209.4 1439.3,208.4 1441.3,207.4 1443.3,208.5 1445.3,208.1 1447.3,206.7 1449.5,207.2 1451.8,208.8 1454.0,208.0 1454,749.7 107,749.7" fill="#06b306"/>
<g clip-path="url(#eqc)">
<polygon points="108.0,692.0 115.0,692.0 109.3,749.7 108.0,749.7" fill="#339733"/>
<polygon points="117.0,691.6 122.4,691.6 118.0,749.7 117.0,749.7" fill="#339733"/>
<rect x="116" y="691.6" width="1" height="58.1" fill="#087808"/>
<polygon points="126.0,691.2 131.9,691.2 127.1,749.7 126.0,749.7" fill="#339733"/>
<rect x="125" y="691.2" width="1" height="58.5" fill="#087808"/>
<polygon points="136.0,691.6 140.5,691.6 136.5,749.7 136.0,749.7" fill="#339733"/>
<polygon points="145.0,692.9 153.0,692.9 146.3,749.7 145.0,749.7" fill="#339733"/>
<polygon points="157.0,692.4 163.1,692.4 158.0,749.7 157.0,749.7" fill="#339733"/>
<rect x="156" y="692.4" width="1" height="57.3" fill="#087808"/>
<polygon points="166.0,691.0 170.6,691.0 166.3,749.7 166.0,749.7" fill="#339733"/>
<rect x="165" y="691.0" width="1" height="58.7" fill="#087808"/>
<polygon points="172.0,691.0 176.5,691.0 172.9,749.7 172.0,749.7" fill="#339733"/>
<polygon points="179.0,692.1 186.7,692.1 180.0,749.7 179.0,749.7" fill="#339733"/>
<polygon points="189.0,692.0 192.2,692.0 189.5,749.7 189.0,749.7" fill="#339733"/>
<polygon points="198.0,674.0 205.6,674.0 199.4,749.7 198.0,749.7" fill="#339733"/>
<polygon points="207.0,667.2 212.7,667.2 208.6,749.7 207.0,749.7" fill="#339733"/>
<polygon points="219.0,654.4 221.3,654.4 219.8,749.7 219.0,749.7" fill="#339733"/>
<polygon points="225.0,654.0 229.3,654.0 226.2,749.7 225.0,749.7" fill="#339733"/>
<polygon points="233.0,653.0 235.7,653.0 233.9,749.7 233.0,749.7" fill="#339733"/>
<rect x="232" y="653.0" width="1" height="96.7" fill="#087808"/>
<polygon points="239.0,651.0 246.6,651.0 239.8,749.7 239.0,749.7" fill="#339733"/>
<rect x="238" y="651.0" width="1" height="98.7" fill="#087808"/>
<polygon points="248.0,651.0 253.4,651.0 249.5,749.7 248.0,749.7" fill="#339733"/>
<polygon points="260.0,654.1 264.1,654.1 261.2,749.7 260.0,749.7" fill="#339733"/>
<polygon points="268.0,657.5 270.5,657.5 268.7,749.7 268.0,749.7" fill="#339733"/>
<rect x="267" y="657.5" width="1" height="92.2" fill="#087808"/>
<polygon points="274.0,656.8 280.7,656.8 274.6,749.7 274.0,749.7" fill="#339733"/>
<polygon points="283.0,653.0 288.4,653.0 284.4,749.7 283.0,749.7" fill="#339733"/>
<polygon points="292.0,642.2 298.0,642.2 292.5,749.7 292.0,749.7" fill="#339733"/>
<polygon points="301.0,640.0 303.5,640.0 302.0,749.7 301.0,749.7" fill="#339733"/>
<polygon points="308.0,640.0 313.0,640.0 309.5,749.7 308.0,749.7" fill="#339733"/>
<rect x="307" y="640.0" width="1" height="109.7" fill="#087808"/>
<polygon points="318.0,640.0 325.6,640.0 319.0,749.7 318.0,749.7" fill="#339733"/>
<polygon points="327.0,638.2 332.1,638.2 327.4,749.7 327.0,749.7" fill="#339733"/>
<rect x="326" y="638.2" width="1" height="111.5" fill="#087808"/>
<polygon points="333.0,638.7 338.1,638.7 333.8,749.7 333.0,749.7" fill="#339733"/>
<rect x="332" y="638.7" width="1" height="111.0" fill="#087808"/>
<polygon points="343.0,636.3 345.7,636.3 343.7,749.7 343.0,749.7" fill="#339733"/>
<rect x="342" y="636.3" width="1" height="113.4" fill="#087808"/>
<polygon points="349.0,636.2 353.3,636.2 349.8,749.7 349.0,749.7" fill="#339733"/>
<polygon points="357.0,636.7 363.9,636.7 357.5,749.7 357.0,749.7" fill="#339733"/>
<polygon points="366.0,634.9 371.1,634.9 367.8,749.7 366.0,749.7" fill="#339733"/>
<polygon points="378.0,633.4 383.0,633.4 378.4,749.7 378.0,749.7" fill="#339733"/>
<polygon points="385.0,627.8 389.5,627.8 386.5,749.7 385.0,749.7" fill="#339733"/>
<polygon points="395.0,624.1 398.9,624.1 395.5,749.7 395.0,749.7" fill="#339733"/>
<rect x="394" y="624.1" width="1" height="125.6" fill="#087808"/>
<polygon points="405.0,614.0 413.3,614.0 405.7,749.7 405.0,749.7" fill="#339733"/>
<polygon points="415.0,603.1 419.5,603.1 416.2,749.7 415.0,749.7" fill="#339733"/>
<polygon points="423.0,595.8 427.4,595.8 424.3,749.7 423.0,749.7" fill="#339733"/>
<rect x="422" y="595.8" width="1" height="153.9" fill="#087808"/>
<polygon points="433.0,580.3 437.1,580.3 433.8,749.7 433.0,749.7" fill="#339733"/>
<polygon points="440.0,579.0 442.9,579.0 440.9,749.7 440.0,749.7" fill="#339733"/>
<rect x="439" y="579.0" width="1" height="170.7" fill="#087808"/>
<polygon points="446.0,571.5 448.3,571.5 446.5,749.7 446.0,749.7" fill="#339733"/>
<rect x="445" y="571.5" width="1" height="178.2" fill="#087808"/>
<polygon points="452.0,561.0 454.2,561.0 452.4,749.7 452.0,749.7" fill="#339733"/>
<polygon points="457.0,551.7 459.4,551.7 457.3,749.7 457.0,749.7" fill="#339733"/>
<rect x="456" y="551.7" width="1" height="198.0" fill="#087808"/>
<polygon points="463.0,550.4 467.7,550.4 463.9,749.7 463.0,749.7" fill="#339733"/>
<polygon points="470.0,545.7 473.9,545.7 470.9,749.7 470.0,749.7" fill="#339733"/>
<rect x="469" y="545.7" width="1" height="204.0" fill="#087808"/>
<polygon points="476.0,548.3 480.9,548.3 477.1,749.7 476.0,749.7" fill="#339733"/>
<rect x="475" y="548.3" width="1" height="201.4" fill="#087808"/>
<polygon points="483.0,544.8 486.5,544.8 483.8,749.7 483.0,749.7" fill="#339733"/>
<rect x="482" y="544.8" width="1" height="204.9" fill="#087808"/>
<polygon points="489.0,546.3 491.3,546.3 489.6,749.7 489.0,749.7" fill="#339733"/>
<polygon points="495.0,536.8 499.5,536.8 495.9,749.7 495.0,749.7" fill="#339733"/>
<rect x="494" y="536.8" width="1" height="212.9" fill="#087808"/>
<polygon points="501.0,538.2 508.2,538.2 502.3,749.7 501.0,749.7" fill="#339733"/>
<rect x="500" y="538.2" width="1" height="211.5" fill="#087808"/>
<polygon points="510.0,540.0 513.9,540.0 510.5,749.7 510.0,749.7" fill="#339733"/>
<polygon points="515.0,537.1 519.3,537.1 515.3,749.7 515.0,749.7" fill="#339733"/>
<rect x="514" y="537.1" width="1" height="212.6" fill="#087808"/>
<polygon points="523.0,526.1 527.0,526.1 524.0,749.7 523.0,749.7" fill="#339733"/>
<polygon points="529.0,520.2 532.8,520.2 529.9,749.7 529.0,749.7" fill="#339733"/>
<polygon points="536.0,518.8 541.2,518.8 536.9,749.7 536.0,749.7" fill="#339733"/>
<polygon points="545.0,519.4 547.5,519.4 545.3,749.7 545.0,749.7" fill="#339733"/>
<rect x="544" y="519.4" width="1" height="230.3" fill="#087808"/>
<polygon points="550.0,519.0 553.6,519.0 550.7,749.7 550.0,749.7" fill="#339733"/>
<polygon points="556.0,521.2 561.6,521.2 556.6,749.7 556.0,749.7" fill="#339733"/>
<rect x="555" y="521.2" width="1" height="228.5" fill="#087808"/>
<polygon points="563.0,522.7 567.3,522.7 563.9,749.7 563.0,749.7" fill="#339733"/>
<rect x="562" y="522.7" width="1" height="227.0" fill="#087808"/>
<polygon points="570.0,522.3 575.4,522.3 570.6,749.7 570.0,749.7" fill="#339733"/>
<rect x="569" y="522.3" width="1" height="227.4" fill="#087808"/>
<polygon points="579.0,525.7 582.1,525.7 579.6,749.7 579.0,749.7" fill="#339733"/>
<polygon points="586.0,516.8 591.5,516.8 586.6,749.7 586.0,749.7" fill="#339733"/>
<polygon points="593.0,514.2 596.2,514.2 593.4,749.7 593.0,749.7" fill="#339733"/>
<rect x="592" y="514.2" width="1" height="235.5" fill="#087808"/>
<polygon points="600.0,514.8 603.5,514.8 600.8,749.7 600.0,749.7" fill="#339733"/>
<rect x="599" y="514.8" width="1" height="234.9" fill="#087808"/>
<polygon points="605.0,515.6 607.4,515.6 605.6,749.7 605.0,749.7" fill="#339733"/>
<polygon points="611.0,505.2 615.3,505.2 611.8,749.7 611.0,749.7" fill="#339733"/>
<polygon points="619.0,485.7 623.6,485.7 620.3,749.7 619.0,749.7" fill="#339733"/>
<rect x="618" y="485.7" width="1" height="264.0" fill="#087808"/>
<polygon points="628.0,447.1 631.4,447.1 628.4,749.7 628.0,749.7" fill="#339733"/>
<rect x="627" y="447.1" width="1" height="302.6" fill="#087808"/>
<polygon points="633.0,441.0 636.4,441.0 633.4,749.7 633.0,749.7" fill="#339733"/>
<rect x="632" y="441.0" width="1" height="308.7" fill="#087808"/>
<polygon points="638.0,440.0 641.3,440.0 638.4,749.7 638.0,749.7" fill="#339733"/>
<rect x="637" y="440.0" width="1" height="309.7" fill="#087808"/>
<polygon points="645.0,440.1 648.4,440.1 645.7,749.7 645.0,749.7" fill="#339733"/>
<polygon points="651.0,421.8 656.8,421.8 651.9,749.7 651.0,749.7" fill="#339733"/>
<rect x="650" y="421.8" width="1" height="327.9" fill="#087808"/>
<polygon points="658.0,418.8 662.3,418.8 659.1,749.7 658.0,749.7" fill="#339733"/>
<polygon points="667.0,415.4 669.2,415.4 667.4,749.7 667.0,749.7" fill="#339733"/>
<rect x="666" y="415.4" width="1" height="334.3" fill="#087808"/>
<polygon points="672.0,408.9 675.3,408.9 672.8,749.7 672.0,749.7" fill="#339733"/>
<polygon points="678.0,415.6 681.3,415.6 678.9,749.7 678.0,749.7" fill="#339733"/>
<rect x="677" y="415.6" width="1" height="334.1" fill="#087808"/>
<polygon points="684.0,417.3 689.2,417.3 685.0,749.7 684.0,749.7" fill="#339733"/>
<polygon points="693.0,427.9 698.0,427.9 693.9,749.7 693.0,749.7" fill="#339733"/>
<polygon points="701.0,434.6 705.1,434.6 701.8,749.7 701.0,749.7" fill="#339733"/>
<rect x="700" y="434.6" width="1" height="315.1" fill="#087808"/>
<polygon points="708.0,434.0 710.7,434.0 708.9,749.7 708.0,749.7" fill="#339733"/>
<polygon points="714.0,428.0 718.3,428.0 714.9,749.7 714.0,749.7" fill="#339733"/>
<rect x="713" y="428.0" width="1" height="321.7" fill="#087808"/>
<polygon points="721.0,427.1 723.6,427.1 721.2,749.7 721.0,749.7" fill="#339733"/>
<rect x="720" y="427.1" width="1" height="322.6" fill="#087808"/>
<polygon points="726.0,427.6 731.9,427.6 726.8,749.7 726.0,749.7" fill="#339733"/>
<rect x="725" y="427.6" width="1" height="322.1" fill="#087808"/>
<polygon points="734.0,422.7 737.4,422.7 734.3,749.7 734.0,749.7" fill="#339733"/>
<polygon points="740.0,417.5 743.5,417.5 741.0,749.7 740.0,749.7" fill="#339733"/>
<polygon points="746.0,412.3 753.4,412.3 746.9,749.7 746.0,749.7" fill="#339733"/>
<polygon points="755.0,417.0 759.4,417.0 755.6,749.7 755.0,749.7" fill="#339733"/>
<polygon points="761.0,410.2 764.7,410.2 761.8,749.7 761.0,749.7" fill="#339733"/>
<polygon points="767.0,403.0 771.8,403.0 768.1,749.7 767.0,749.7" fill="#339733"/>
<polygon points="774.0,396.0 777.5,396.0 774.4,749.7 774.0,749.7" fill="#339733"/>
<polygon points="781.0,392.4 785.5,392.4 781.4,749.7 781.0,749.7" fill="#339733"/>
<polygon points="788.0,391.1 791.3,391.1 788.2,749.7 788.0,749.7" fill="#339733"/>
<polygon points="793.0,387.2 798.0,387.2 794.3,749.7 793.0,749.7" fill="#339733"/>
<rect x="792" y="387.2" width="1" height="362.5" fill="#087808"/>
<polygon points="801.0,382.2 805.2,382.2 801.3,749.7 801.0,749.7" fill="#339733"/>
<polygon points="807.0,383.4 813.5,383.4 808.1,749.7 807.0,749.7" fill="#339733"/>
<rect x="806" y="383.4" width="1" height="366.3" fill="#087808"/>
<polygon points="815.0,394.2 819.1,394.2 815.4,749.7 815.0,749.7" fill="#339733"/>
<rect x="814" y="394.2" width="1" height="355.5" fill="#087808"/>
<polygon points="822.0,403.2 827.5,403.2 822.5,749.7 822.0,749.7" fill="#339733"/>
<rect x="821" y="403.2" width="1" height="346.5" fill="#087808"/>
<polygon points="831.0,392.2 835.1,392.2 831.3,749.7 831.0,749.7" fill="#339733"/>
<polygon points="836.0,387.6 837.8,387.6 836.3,749.7 836.0,749.7" fill="#339733"/>
<rect x="835" y="387.6" width="1" height="362.1" fill="#087808"/>
<polygon points="841.0,391.6 844.6,391.6 841.6,749.7 841.0,749.7" fill="#339733"/>
<polygon points="848.0,401.3 851.6,401.3 848.7,749.7 848.0,749.7" fill="#339733"/>
<polygon points="854.0,399.6 859.0,399.6 854.9,749.7 854.0,749.7" fill="#339733"/>
<polygon points="861.0,395.3 863.7,395.3 861.4,749.7 861.0,749.7" fill="#339733"/>
<polygon points="866.0,393.1 869.7,393.1 866.9,749.7 866.0,749.7" fill="#339733"/>
<polygon points="872.0,389.3 876.3,389.3 873.0,749.7 872.0,749.7" fill="#339733"/>
<polygon points="879.0,384.5 881.8,384.5 879.8,749.7 879.0,749.7" fill="#339733"/>
<polygon points="885.0,383.5 888.0,383.5 885.5,749.7 885.0,749.7" fill="#339733"/>
<polygon points="891.0,381.6 896.2,381.6 891.4,749.7 891.0,749.7" fill="#339733"/>
<rect x="890" y="381.6" width="1" height="368.1" fill="#087808"/>
<polygon points="898.0,381.3 900.9,381.3 898.4,749.7 898.0,749.7" fill="#339733"/>
<rect x="897" y="381.3" width="1" height="368.4" fill="#087808"/>
<polygon points="905.0,361.1 911.1,361.1 905.7,749.7 905.0,749.7" fill="#339733"/>
<polygon points="913.0,351.7 915.7,351.7 913.7,749.7 913.0,749.7" fill="#339733"/>
<polygon points="919.0,349.3 921.7,349.3 919.7,749.7 919.0,749.7" fill="#339733"/>
<polygon points="925.0,348.1 927.9,348.1 925.7,749.7 925.0,749.7" fill="#339733"/>
<polygon points="932.0,347.9 937.3,347.9 932.7,749.7 932.0,749.7" fill="#339733"/>
<rect x="931" y="347.9" width="1" height="401.8" fill="#087808"/>
<polygon points="939.0,344.5 942.8,344.5 939.6,749.7 939.0,749.7" fill="#339733"/>
<rect x="938" y="344.5" width="1" height="405.2" fill="#087808"/>
<polygon points="948.0,342.7 953.1,342.7 948.9,749.7 948.0,749.7" fill="#339733"/>
<rect x="947" y="342.7" width="1" height="407.0" fill="#087808"/>
<polygon points="954.0,336.8 956.1,336.8 954.6,749.7 954.0,749.7" fill="#339733"/>
<rect x="953" y="336.8" width="1" height="412.9" fill="#087808"/>
<polygon points="959.0,336.9 962.1,336.9 959.6,749.7 959.0,749.7" fill="#339733"/>
<polygon points="965.0,334.1 968.6,334.1 965.7,749.7 965.0,749.7" fill="#339733"/>
<polygon points="973.0,330.0 976.9,330.0 973.3,749.7 973.0,749.7" fill="#339733"/>
<rect x="972" y="330.0" width="1" height="419.7" fill="#087808"/>
<polygon points="978.0,328.3 981.9,328.3 978.4,749.7 978.0,749.7" fill="#339733"/>
<rect x="977" y="328.3" width="1" height="421.4" fill="#087808"/>
<polygon points="985.0,323.4 987.6,323.4 985.3,749.7 985.0,749.7" fill="#339733"/>
<polygon points="990.0,322.0 995.1,322.0 990.5,749.7 990.0,749.7" fill="#339733"/>
<polygon points="998.0,320.3 1003.3,320.3 998.5,749.7 998.0,749.7" fill="#339733"/>
<polygon points="1005.0,320.1 1009.5,320.1 1005.5,749.7 1005.0,749.7" fill="#339733"/>
<polygon points="1011.0,318.2 1016.1,318.2 1011.9,749.7 1011.0,749.7" fill="#339733"/>
<rect x="1010" y="318.2" width="1" height="431.5" fill="#087808"/>
<polygon points="1018.0,316.0 1020.3,316.0 1018.5,749.7 1018.0,749.7" fill="#339733"/>
<rect x="1017" y="316.0" width="1" height="433.7" fill="#087808"/>
<polygon points="1024.0,315.3 1028.0,315.3 1024.8,749.7 1024.0,749.7" fill="#339733"/>
<polygon points="1029.0,312.1 1031.3,312.1 1029.8,749.7 1029.0,749.7" fill="#339733"/>
<polygon points="1034.0,310.8 1037.2,310.8 1034.6,749.7 1034.0,749.7" fill="#339733"/>
<rect x="1033" y="310.8" width="1" height="438.9" fill="#087808"/>
<polygon points="1041.0,311.2 1044.3,311.2 1042.0,749.7 1041.0,749.7" fill="#339733"/>
<polygon points="1047.0,311.5 1051.4,311.5 1047.9,749.7 1047.0,749.7" fill="#339733"/>
<rect x="1046" y="311.5" width="1" height="438.2" fill="#087808"/>
<polygon points="1053.0,311.8 1057.3,311.8 1053.4,749.7 1053.0,749.7" fill="#339733"/>
<rect x="1052" y="311.8" width="1" height="437.9" fill="#087808"/>
<polygon points="1059.0,312.6 1062.7,312.6 1059.6,749.7 1059.0,749.7" fill="#339733"/>
<rect x="1058" y="312.6" width="1" height="437.1" fill="#087808"/>
<polygon points="1064.0,314.0 1067.3,314.0 1065.0,749.7 1064.0,749.7" fill="#339733"/>
<rect x="1063" y="314.0" width="1" height="435.7" fill="#087808"/>
<polygon points="1071.0,316.0 1077.7,316.0 1071.9,749.7 1071.0,749.7" fill="#339733"/>
<polygon points="1079.0,309.7 1085.8,309.7 1079.4,749.7 1079.0,749.7" fill="#339733"/>
<rect x="1078" y="309.7" width="1" height="440.0" fill="#087808"/>
<polygon points="1088.0,308.2 1090.7,308.2 1088.8,749.7 1088.0,749.7" fill="#339733"/>
<rect x="1087" y="308.2" width="1" height="441.5" fill="#087808"/>
<polygon points="1093.0,307.4 1097.7,307.4 1093.6,749.7 1093.0,749.7" fill="#339733"/>
<rect x="1092" y="307.4" width="1" height="442.3" fill="#087808"/>
<polygon points="1099.0,306.4 1105.6,306.4 1099.7,749.7 1099.0,749.7" fill="#339733"/>
<rect x="1098" y="306.4" width="1" height="443.3" fill="#087808"/>
<polygon points="1107.0,303.5 1110.7,303.5 1107.5,749.7 1107.0,749.7" fill="#339733"/>
<polygon points="1114.0,299.3 1118.8,299.3 1114.9,749.7 1114.0,749.7" fill="#339733"/>
<rect x="1113" y="299.3" width="1" height="450.4" fill="#087808"/>
<polygon points="1121.0,301.7 1125.5,301.7 1121.8,749.7 1121.0,749.7" fill="#339733"/>
<rect x="1120" y="301.7" width="1" height="448.0" fill="#087808"/>
<polygon points="1128.0,301.8 1131.0,301.8 1128.6,749.7 1128.0,749.7" fill="#339733"/>
<rect x="1127" y="301.8" width="1" height="447.9" fill="#087808"/>
<polygon points="1136.0,295.3 1138.7,295.3 1137.0,749.7 1136.0,749.7" fill="#339733"/>
<rect x="1135" y="295.3" width="1" height="454.4" fill="#087808"/>
<polygon points="1143.0,295.3 1147.3,295.3 1144.2,749.7 1143.0,749.7" fill="#339733"/>
<rect x="1142" y="295.3" width="1" height="454.4" fill="#087808"/>
<polygon points="1152.0,296.3 1156.9,296.3 1152.8,749.7 1152.0,749.7" fill="#339733"/>
<rect x="1151" y="296.3" width="1" height="453.4" fill="#087808"/>
<polygon points="1158.0,296.9 1162.6,296.9 1158.4,749.7 1158.0,749.7" fill="#339733"/>
<polygon points="1165.0,290.3 1168.7,290.3 1166.3,749.7 1165.0,749.7" fill="#339733"/>
<rect x="1164" y="290.3" width="1" height="459.4" fill="#087808"/>
<polygon points="1174.0,286.4 1176.5,286.4 1174.6,749.7 1174.0,749.7" fill="#339733"/>
<polygon points="1180.0,284.7 1185.9,284.7 1181.1,749.7 1180.0,749.7" fill="#339733"/>
<polygon points="1189.0,284.1 1194.2,284.1 1189.7,749.7 1189.0,749.7" fill="#339733"/>
<polygon points="1196.0,275.0 1201.0,275.0 1196.5,749.7 1196.0,749.7" fill="#339733"/>
<rect x="1195" y="275.0" width="1" height="474.7" fill="#087808"/>
<polygon points="1203.0,272.7 1208.2,272.7 1203.8,749.7 1203.0,749.7" fill="#339733"/>
<rect x="1202" y="272.7" width="1" height="477.0" fill="#087808"/>
<polygon points="1210.0,268.3 1214.6,268.3 1210.9,749.7 1210.0,749.7" fill="#339733"/>
<polygon points="1217.0,260.8 1221.7,260.8 1217.9,749.7 1217.0,749.7" fill="#339733"/>
<rect x="1216" y="260.8" width="1" height="488.9" fill="#087808"/>
<polygon points="1224.0,257.2 1228.2,257.2 1224.8,749.7 1224.0,749.7" fill="#339733"/>
<rect x="1223" y="257.2" width="1" height="492.5" fill="#087808"/>
<polygon points="1231.0,257.2 1234.3,257.2 1231.2,749.7 1231.0,749.7" fill="#339733"/>
<rect x="1230" y="257.2" width="1" height="492.5" fill="#087808"/>
<polygon points="1236.0,257.2 1239.3,257.2 1236.3,749.7 1236.0,749.7" fill="#339733"/>
<rect x="1235" y="257.2" width="1" height="492.5" fill="#087808"/>
<polygon points="1241.0,252.5 1245.4,252.5 1241.9,749.7 1241.0,749.7" fill="#339733"/>
<rect x="1240" y="252.5" width="1" height="497.2" fill="#087808"/>
<polygon points="1247.0,246.9 1251.7,246.9 1247.6,749.7 1247.0,749.7" fill="#339733"/>
<rect x="1246" y="246.9" width="1" height="502.8" fill="#087808"/>
<polygon points="1254.0,243.1 1257.6,243.1 1254.7,749.7 1254.0,749.7" fill="#339733"/>
<rect x="1253" y="243.1" width="1" height="506.6" fill="#087808"/>
<polygon points="1261.0,239.4 1265.5,239.4 1261.6,749.7 1261.0,749.7" fill="#339733"/>
<polygon points="1267.0,232.8 1271.0,232.8 1267.9,749.7 1267.0,749.7" fill="#339733"/>
<rect x="1266" y="232.8" width="1" height="516.9" fill="#087808"/>
<polygon points="1274.0,231.4 1277.2,231.4 1274.7,749.7 1274.0,749.7" fill="#339733"/>
<polygon points="1280.0,231.1 1283.5,231.1 1280.9,749.7 1280.0,749.7" fill="#339733"/>
<polygon points="1287.0,231.8 1290.4,231.8 1287.5,749.7 1287.0,749.7" fill="#339733"/>
<rect x="1286" y="231.8" width="1" height="517.9" fill="#087808"/>
<polygon points="1293.0,226.8 1295.7,226.8 1293.3,749.7 1293.0,749.7" fill="#339733"/>
<rect x="1292" y="226.8" width="1" height="522.9" fill="#087808"/>
<polygon points="1300.0,228.8 1306.8,228.8 1300.9,749.7 1300.0,749.7" fill="#339733"/>
<polygon points="1309.0,222.8 1310.9,222.8 1309.3,749.7 1309.0,749.7" fill="#339733"/>
<polygon points="1314.0,222.0 1318.2,222.0 1314.6,749.7 1314.0,749.7" fill="#339733"/>
<polygon points="1320.0,221.0 1323.4,221.0 1320.4,749.7 1320.0,749.7" fill="#339733"/>
<rect x="1319" y="221.0" width="1" height="528.7" fill="#087808"/>
<polygon points="1327.0,215.5 1330.7,215.5 1327.4,749.7 1327.0,749.7" fill="#339733"/>
<polygon points="1334.0,216.8 1338.0,216.8 1335.0,749.7 1334.0,749.7" fill="#339733"/>
<rect x="1333" y="216.8" width="1" height="532.9" fill="#087808"/>
<polygon points="1341.0,214.4 1344.2,214.4 1342.1,749.7 1341.0,749.7" fill="#339733"/>
<polygon points="1348.0,217.6 1350.7,217.6 1349.0,749.7 1348.0,749.7" fill="#339733"/>
<rect x="1347" y="217.6" width="1" height="532.1" fill="#087808"/>
<polygon points="1355.0,211.7 1360.1,211.7 1356.1,749.7 1355.0,749.7" fill="#339733"/>
<polygon points="1363.0,207.9 1368.2,207.9 1363.7,749.7 1363.0,749.7" fill="#339733"/>
<polygon points="1370.0,204.4 1372.6,204.4 1370.8,749.7 1370.0,749.7" fill="#339733"/>
<polygon points="1376.0,203.3 1381.3,203.3 1376.5,749.7 1376.0,749.7" fill="#339733"/>
<rect x="1375" y="203.3" width="1" height="546.4" fill="#087808"/>
<polygon points="1383.0,208.0 1386.8,208.0 1383.9,749.7 1383.0,749.7" fill="#339733"/>
<polygon points="1389.0,209.7 1392.1,209.7 1389.8,749.7 1389.0,749.7" fill="#339733"/>
<polygon points="1397.0,208.5 1400.1,208.5 1397.4,749.7 1397.0,749.7" fill="#339733"/>
<rect x="1396" y="208.5" width="1" height="541.2" fill="#087808"/>
<polygon points="1403.0,205.9 1405.7,205.9 1403.8,749.7 1403.0,749.7" fill="#339733"/>
<rect x="1402" y="205.9" width="1" height="543.8" fill="#087808"/>
<polygon points="1410.0,203.1 1413.8,203.1 1410.5,749.7 1410.0,749.7" fill="#339733"/>
<polygon points="1418.0,202.9 1423.1,202.9 1418.6,749.7 1418.0,749.7" fill="#339733"/>
<rect x="1417" y="202.9" width="1" height="546.8" fill="#087808"/>
<polygon points="1425.0,205.6 1429.8,205.6 1425.7,749.7 1425.0,749.7" fill="#339733"/>
<rect x="1424" y="205.6" width="1" height="544.1" fill="#087808"/>
<polygon points="1432.0,205.6 1436.2,205.6 1432.9,749.7 1432.0,749.7" fill="#339733"/>
<rect x="1431" y="205.6" width="1" height="544.1" fill="#087808"/>
<polygon points="1438.0,203.8 1443.4,203.8 1439.0,749.7 1438.0,749.7" fill="#339733"/>
<polygon points="1445.0,202.4 1452.5,202.4 1446.1,749.7 1445.0,749.7" fill="#339733"/>
<rect x="1444" y="202.4" width="1" height="547.3" fill="#087808"/>
<polygon points="1454.0,202.8 1457.8,202.8 1454.5,749.7 1454.0,749.7" fill="#339733"/>
<rect x="1453" y="202.8" width="1" height="546.9" fill="#087808"/>
</g>
<polyline points="107.0,698.0 108.4,696.9 109.8,698.0 111.2,697.2 112.6,698.0 114.0,697.5 115.3,697.7 116.6,695.2 117.9,694.7 119.2,697.8 120.5,695.2 121.8,694.8 123.2,697.6 124.5,695.2 125.8,696.4 127.1,694.7 128.4,695.1 129.7,692.9 131.0,694.0 132.7,696.5 134.4,698.0 135.8,699.5 137.2,698.1 138.6,699.0 139.9,698.7 141.3,696.3 142.7,698.0 144.1,700.4 145.5,701.2 146.8,701.5 148.2,701.8 149.6,706.5 151.0,706.5 152.6,705.2 154.1,705.0 155.7,703.0 157.3,703.2 158.9,701.2 160.5,699.0 161.9,701.4 163.3,699.9 164.7,702.2 166.0,701.4 167.4,704.1 168.8,703.0 170.4,708.0 171.9,708.5 173.5,713.6 175.0,711.3 176.5,710.7 178.0,711.0 179.7,716.9 181.3,718.7 183.0,723.0 184.8,730.5 186.5,737.0 188.0,739.2 189.5,743.0 191.0,745.5 192.5,749.0 194.2,740.8 196.0,733.8 197.3,731.2 198.7,728.2 200.0,726.5 201.3,722.7 202.7,720.7 204.0,716.0 205.5,713.9 207.0,710.9 208.5,706.0 210.0,701.8 211.4,698.7 212.8,699.7 214.1,698.3 215.5,696.3 216.9,693.1 218.2,691.9 219.6,688.1 221.0,687.5 222.6,689.7 224.1,689.5 225.7,690.0 227.3,687.5 228.8,684.9 230.4,685.0 231.8,688.5 233.2,691.2 234.6,689.7 236.0,693.5 237.3,693.1 238.7,689.9 240.0,688.7 241.3,686.9 242.7,687.1 244.0,688.6 245.4,688.6 246.7,684.9 248.1,686.8 249.4,686.0 250.8,685.4 252.2,689.4 253.6,689.1 254.9,692.5 256.3,694.2 257.7,693.5 259.0,693.7 260.3,695.8 261.6,693.2 262.9,692.4 264.2,694.6 265.5,692.5 266.8,693.3 268.1,694.3 269.4,695.3 270.7,695.0 272.0,692.3 273.4,690.6 274.7,692.6 276.0,689.1 277.3,690.4 278.7,688.9 280.0,686.0 281.7,686.0 283.3,686.8 285.0,687.5 286.4,684.7 287.8,682.3 289.2,679.2 290.6,676.1 292.0,673.0 293.5,675.2 295.0,678.3 296.5,678.3 298.0,680.0 299.8,677.6 301.6,675.7 303.0,676.8 304.4,675.2 305.9,675.7 307.3,678.7 308.7,677.0 310.0,676.0 311.3,675.1 312.6,671.9 313.9,672.5 315.2,672.1 316.5,668.8 317.8,670.1 319.1,669.2 320.4,665.8 321.7,667.1 323.0,665.5 324.4,667.2 325.9,670.0 327.4,670.5 328.8,673.0 330.4,673.5 332.0,673.3 333.6,672.0 335.0,671.7 336.4,673.4 337.8,677.5 339.2,680.3 340.6,679.0 342.0,681.6 343.5,682.0 345.0,683.1 346.5,682.6 348.0,683.3 349.5,683.7 351.0,685.0 352.3,684.1 353.7,684.7 355.0,684.0 356.5,684.4 358.0,685.9 359.5,688.6 361.0,688.7 362.5,685.9 364.1,687.2 365.6,686.0 367.1,689.0 368.5,689.4 370.0,692.3 371.7,690.8 373.3,692.6 375.0,691.0 376.5,688.4 377.9,686.5 379.4,685.9 380.8,685.4 382.3,683.0 383.7,681.7 385.1,682.9 386.5,683.3 387.8,685.6 389.2,684.3 390.6,684.9 392.1,683.1 393.6,678.4 395.1,677.8 396.6,679.9 398.1,675.8 399.6,673.1 401.9,655.8 404.1,659.5 406.0,652.6 407.9,644.5 409.4,645.1 410.9,642.7 412.8,643.4 414.7,644.5 416.6,638.9 418.5,635.4 420.0,632.8 421.5,633.2 422.8,630.7 424.1,626.7 425.5,626.5 426.8,622.6 428.3,629.3 429.8,633.2 432.0,627.9 433.5,628.4 435.1,630.5 436.6,633.2 438.5,634.0 440.3,632.4 442.2,636.8 444.1,640.0 445.6,630.1 447.1,630.6 448.6,628.6 450.5,620.8 452.4,614.3 453.9,611.3 455.4,611.3 457.7,597.0 459.2,604.5 461.4,602.2 462.9,603.4 464.5,607.4 466.0,608.3 467.5,603.6 469.0,600.7 470.9,605.4 472.8,611.3 474.3,609.5 475.8,608.3 477.4,602.5 479.0,597.1 480.6,592.0 482.0,596.1 483.4,595.4 484.9,597.2 486.3,603.4 487.7,604.0 489.1,603.1 490.6,601.1 492.0,596.5 493.5,596.2 494.9,592.0 496.2,595.1 497.5,593.7 498.8,597.3 500.1,599.1 501.4,599.8 502.8,600.7 504.1,601.2 505.4,602.8 506.7,603.8 508.0,606.3 509.3,603.4 510.7,604.2 512.0,601.8 513.3,602.7 514.7,598.4 516.0,599.0 517.5,597.1 518.9,592.7 520.4,590.1 521.8,586.5 523.3,581.4 524.9,586.5 526.4,588.8 528.0,592.0 529.6,587.3 531.2,587.5 532.8,583.8 534.4,584.5 535.9,586.9 537.5,589.7 538.9,588.3 540.3,585.7 541.6,583.2 543.0,583.3 544.4,579.9 545.8,577.4 547.2,578.0 548.7,579.0 550.1,582.7 551.6,582.4 553.0,583.8 554.6,587.7 556.1,588.7 557.7,592.0 559.3,589.6 560.8,589.8 562.4,588.5 563.7,591.1 565.0,589.8 566.4,593.6 567.7,595.4 569.0,596.3 570.4,597.7 571.7,595.7 573.0,599.0 574.4,601.9 575.8,605.3 577.2,604.4 578.6,607.7 580.0,611.0 581.4,608.0 582.8,607.1 584.2,604.6 585.5,602.8 586.9,602.0 588.3,596.8 589.7,596.8 591.0,596.0 592.4,597.4 593.7,598.4 595.0,599.2 596.3,603.8 597.7,604.4 599.0,604.0 600.4,604.1 601.8,607.5 603.2,608.6 604.7,610.3 606.1,612.2 607.5,614.6 609.0,612.2 610.5,609.0 611.9,605.1 613.4,602.7 614.8,595.7 616.2,590.6 617.5,584.0 618.9,580.1 620.3,575.0 621.7,568.4 623.2,560.8 624.7,552.5 626.1,545.8 627.6,540.0 629.4,551.3 631.2,563.6 632.7,565.2 634.1,567.1 635.5,566.7 637.0,568.4 638.4,569.4 639.7,568.5 641.1,567.6 642.5,567.2 643.9,567.5 645.2,568.2 646.6,567.2 648.2,558.6 649.8,551.4 651.4,542.3 652.9,541.6 654.3,540.1 655.8,540.7 657.3,540.0 658.7,542.7 660.1,542.2 661.5,545.6 662.8,547.6 664.2,551.4 665.6,551.8 667.0,550.5 668.4,545.1 669.9,544.2 671.3,540.6 672.7,536.4 674.2,536.3 675.7,538.1 677.1,537.6 678.6,540.0 680.2,546.4 681.8,550.8 683.4,555.3 685.2,555.1 687.0,551.8 688.6,556.9 690.1,560.3 691.7,563.6 693.5,563.4 695.2,561.3 696.8,564.7 698.4,566.0 700.0,570.7 701.4,569.7 702.8,565.9 704.2,565.1 705.5,566.2 706.9,561.9 708.3,560.7 709.7,560.9 711.0,559.0 712.3,561.8 713.6,558.7 714.9,557.7 716.2,559.3 717.5,561.2 718.9,558.9 720.2,562.3 721.5,562.1 722.9,563.3 724.2,562.5 725.6,567.3 727.1,568.9 728.5,572.8 729.9,572.7 731.3,578.7 732.8,580.7 734.2,584.5 735.6,586.7 737.0,582.8 738.4,583.1 739.8,581.5 741.1,575.7 742.5,574.5 743.9,573.2 745.3,570.6 746.6,573.5 748.0,572.8 749.3,574.2 750.6,576.1 752.0,579.1 753.3,580.3 754.6,577.8 756.0,572.9 757.3,569.3 758.7,565.9 760.0,562.2 761.4,559.3 762.7,556.7 764.0,553.1 765.3,552.5 766.6,552.2 767.9,548.0 769.5,552.0 771.1,557.6 772.7,560.9 774.0,557.1 775.3,556.9 776.6,554.7 777.9,552.0 779.2,548.9 780.5,550.1 781.8,551.0 783.1,552.8 784.4,554.9 785.7,554.4 787.1,551.6 788.4,550.1 789.8,551.3 791.1,550.7 792.4,547.7 793.8,546.3 795.4,543.7 797.0,542.4 798.6,539.2 800.2,543.4 801.8,549.1 803.4,554.3 805.0,560.9 806.3,562.0 807.7,561.8 809.0,562.2 810.3,564.9 811.7,566.7 813.0,565.7 814.4,569.5 815.7,575.7 817.1,579.1 818.5,585.4 819.8,589.0 821.2,593.2 822.9,586.6 824.5,581.9 825.9,580.2 827.2,578.9 828.5,580.2 829.9,579.2 831.2,577.8 832.6,578.6 833.9,575.9 835.3,573.6 836.6,573.2 837.9,568.6 839.3,569.8 840.6,565.7 841.9,570.5 843.2,575.8 844.5,580.2 845.8,586.5 847.1,590.0 848.5,591.0 849.8,589.7 851.2,589.1 852.5,589.7 853.9,590.0 855.2,588.3 856.5,589.8 857.8,593.1 859.1,596.0 860.4,595.9 861.7,598.0 863.1,595.1 864.6,593.4 866.0,593.5 867.4,591.5 868.9,590.9 870.3,588.7 871.7,584.4 873.2,582.4 874.6,581.9 876.2,578.9 877.8,576.6 879.4,576.6 881.0,573.8 882.3,575.4 883.6,575.7 884.9,573.3 886.2,575.9 887.5,573.9 888.8,574.5 890.1,575.8 891.4,573.4 892.7,573.6 894.0,575.4 895.3,578.4 896.6,577.8 897.9,579.7 899.2,582.2 900.5,583.5 901.8,580.2 903.2,573.5 904.5,570.7 905.8,567.1 907.2,563.3 908.5,559.3 910.0,557.5 911.5,558.3 913.0,559.1 914.5,556.2 916.0,556.0 917.4,558.9 918.7,560.0 920.0,563.3 921.4,567.7 922.8,568.2 924.1,574.0 925.5,576.9 926.8,576.4 928.1,582.5 929.5,583.5 930.8,580.4 932.1,579.4 933.4,576.8 934.7,572.4 936.0,570.6 937.6,575.1 939.3,578.7 940.9,581.9 942.3,582.0 943.8,578.8 945.2,579.7 946.6,579.4 948.1,577.2 949.5,575.6 950.9,572.8 952.4,573.3 953.8,572.2 955.4,573.7 957.1,577.3 958.7,578.6 960.1,578.2 961.4,576.6 962.8,573.9 964.2,574.6 965.6,573.4 966.9,570.5 968.3,570.6 969.6,574.1 970.9,575.1 972.2,574.9 973.5,580.1 974.8,580.3 976.1,578.3 977.5,578.5 978.8,579.5 980.2,578.5 981.5,577.8 982.9,577.0 984.5,580.8 986.1,583.3 987.7,586.7 989.1,586.0 990.4,585.6 991.8,585.2 993.2,587.9 994.5,588.2 995.9,587.4 997.3,588.3 998.6,586.8 1000.0,587.5 1001.4,584.9 1002.9,583.7 1004.3,584.0 1005.7,579.0 1007.2,579.2 1008.6,576.6 1010.0,577.0 1011.5,573.7 1012.9,572.6 1014.2,571.3 1015.6,571.0 1016.9,571.0 1018.2,571.3 1019.6,569.0 1020.9,570.4 1022.2,566.8 1023.5,566.9 1024.9,565.6 1026.2,565.1 1027.5,567.1 1028.9,566.3 1030.2,564.8 1031.8,564.6 1033.4,565.7 1035.0,567.7 1036.6,569.1 1038.2,569.9 1039.8,570.0 1041.4,569.5 1043.0,568.3 1044.5,571.5 1045.9,572.6 1047.4,576.9 1048.7,576.2 1050.0,575.2 1051.3,576.2 1052.6,576.1 1053.9,575.6 1055.2,576.4 1056.6,578.6 1058.0,582.7 1059.3,581.7 1060.7,586.8 1062.0,589.2 1063.4,591.4 1064.7,591.6 1066.3,590.9 1067.8,591.4 1069.4,591.3 1071.0,590.7 1072.3,589.9 1073.6,590.0 1075.0,587.5 1076.3,584.7 1077.6,584.2 1079.2,587.0 1080.8,586.9 1082.4,588.8 1084.0,589.8 1085.5,589.6 1086.9,585.5 1088.4,586.4 1089.7,588.0 1091.1,588.1 1092.4,588.0 1093.7,588.6 1095.0,588.9 1096.3,588.4 1097.7,590.3 1099.0,590.7 1100.4,587.7 1101.8,588.3 1103.1,587.7 1104.5,585.7 1105.9,585.0 1107.2,585.4 1108.6,584.0 1110.0,581.2 1111.4,580.2 1112.8,583.4 1114.2,583.2 1115.7,581.4 1117.1,583.1 1118.5,584.2 1119.8,584.6 1121.1,585.5 1122.4,588.8 1123.7,591.8 1125.0,591.6 1126.4,586.0 1127.9,583.3 1129.3,576.9 1130.6,577.1 1132.0,574.4 1133.3,576.7 1134.7,575.2 1136.0,575.9 1137.3,574.5 1138.7,574.1 1140.0,572.6 1141.4,572.6 1142.7,575.2 1144.1,576.3 1145.5,576.7 1146.8,575.7 1148.2,577.6 1149.5,577.2 1150.9,576.3 1152.3,576.7 1153.6,577.5 1155.0,579.9 1156.3,577.6 1157.6,576.3 1159.0,576.5 1160.3,576.2 1161.6,574.3 1162.9,574.6 1164.3,574.3 1165.7,575.4 1167.0,574.2 1168.3,575.0 1169.7,576.3 1171.1,575.0 1172.4,575.6 1173.7,573.5 1175.1,575.5 1176.4,574.0 1177.7,571.7 1179.1,570.9 1180.4,570.7 1181.7,570.2 1183.0,567.8 1184.4,566.1 1185.7,566.1 1187.0,567.6 1188.4,564.2 1189.7,564.8 1191.1,563.7 1192.6,561.7 1194.0,560.8 1195.4,559.7 1196.9,559.6 1198.3,557.7 1199.7,556.2 1201.2,555.6 1202.6,556.2 1204.0,552.7 1205.4,551.9 1206.8,548.0 1208.2,545.7 1209.6,545.2 1211.0,543.3 1212.5,541.5 1214.0,541.2 1215.5,537.2 1217.0,537.2 1218.5,535.7 1220.0,534.7 1221.6,535.2 1223.2,541.3 1224.7,540.6 1226.3,544.1 1227.6,543.0 1229.0,545.1 1230.3,544.4 1231.7,546.7 1233.0,546.2 1234.3,545.8 1235.7,546.1 1237.0,548.4 1238.3,548.2 1239.7,545.4 1241.0,546.3 1242.4,544.0 1243.8,544.8 1245.1,541.2 1246.5,539.9 1247.8,539.8 1249.1,539.7 1250.4,542.8 1251.7,542.9 1253.0,542.6 1254.3,544.1 1255.8,540.5 1257.2,541.0 1258.7,540.2 1260.1,536.7 1261.5,532.4 1263.0,532.5 1264.7,530.0 1266.3,529.6 1268.0,530.6 1269.5,530.8 1271.0,531.7 1272.5,533.3 1274.0,536.6 1275.3,536.4 1276.6,536.6 1278.0,533.0 1279.3,535.3 1280.6,532.5 1281.9,531.8 1283.3,532.4 1284.8,532.3 1286.2,531.8 1287.6,527.7 1289.0,528.2 1290.5,528.8 1291.9,527.8 1293.2,530.4 1294.5,527.8 1295.8,529.4 1297.2,532.4 1298.5,530.3 1299.8,532.6 1301.1,528.7 1302.5,525.0 1303.8,523.0 1305.1,520.5 1306.5,514.0 1307.8,511.9 1309.3,514.6 1310.8,516.2 1312.3,518.3 1313.8,518.7 1315.1,517.5 1316.4,517.5 1317.7,513.9 1319.1,512.6 1320.4,510.5 1321.7,511.2 1323.0,508.7 1324.5,510.1 1325.9,510.7 1327.3,511.8 1328.8,515.4 1330.2,516.5 1331.7,517.5 1333.0,520.5 1334.4,521.4 1335.7,524.0 1337.0,524.8 1338.4,529.3 1339.7,530.6 1341.2,528.2 1342.7,529.5 1344.2,530.1 1345.7,528.6 1347.1,530.2 1348.5,528.7 1349.9,530.1 1351.4,533.4 1352.8,533.5 1354.2,535.3 1355.6,534.6 1357.1,534.1 1358.6,530.4 1360.1,530.2 1361.6,526.6 1363.0,526.2 1364.4,523.3 1365.8,522.2 1367.3,519.7 1368.7,519.7 1370.1,520.6 1371.5,517.5 1372.9,517.2 1374.4,520.4 1375.8,519.8 1377.2,521.0 1378.6,524.6 1380.1,524.3 1381.5,526.6 1382.9,524.6 1384.4,524.9 1385.8,526.7 1387.2,526.3 1388.6,523.9 1390.1,524.6 1391.5,525.5 1393.0,524.7 1394.5,519.0 1395.9,517.6 1397.4,514.7 1398.7,513.7 1400.1,514.5 1401.4,513.1 1402.7,513.2 1404.1,511.5 1405.4,509.5 1406.7,508.7 1408.1,507.7 1409.4,508.7 1410.8,510.6 1412.3,508.3 1413.7,508.5 1415.1,512.9 1416.5,510.4 1418.0,513.7 1419.4,512.7 1420.9,513.5 1422.3,517.6 1423.8,519.1 1425.3,522.7 1426.6,523.7 1428.0,522.5 1429.3,522.3 1430.6,522.4 1432.0,522.5 1433.3,520.7 1434.6,521.1 1436.0,523.1 1437.3,523.4 1438.6,523.1 1440.0,527.0 1441.3,526.6 1442.6,526.0 1444.0,525.9 1445.3,522.5 1446.6,522.8 1448.0,521.5 1449.3,520.7 1450.9,522.9 1452.4,521.7 1454.0,524.7" fill="none" stroke="#000" stroke-width="1.1" stroke-linejoin="miter"/>
</svg>
<div class="t" style="left:69.60px;top:428.87px;font-size:11.5px;color:#7a7a7a;transform:scaleX(1.0510);">1,00M</div>
<div class="t" style="left:57.60px;top:694.67px;font-size:11.5px;color:#7a7a7a;transform:scaleX(1.0919);">100.000</div>
<div class="t" style="left:76.60px;top:754.77px;font-size:11.5px;color:#7a7a7a;transform:scaleX(1.1647);">4/12/2019</div>
<div class="t" style="left:189.50px;top:754.77px;font-size:11.5px;color:#7a7a7a;transform:scaleX(1.1501);">29/04/2020</div>
<div class="t" style="left:305.70px;top:754.77px;font-size:11.5px;color:#7a7a7a;transform:scaleX(1.1501);">21/09/2020</div>
<div class="t" style="left:421.90px;top:754.77px;font-size:11.5px;color:#7a7a7a;transform:scaleX(1.1501);">12/02/2021</div>
<div class="t" style="left:541.40px;top:754.77px;font-size:11.5px;color:#7a7a7a;transform:scaleX(1.1647);">8/07/2021</div>
<div class="t" style="left:654.30px;top:754.77px;font-size:11.5px;color:#7a7a7a;transform:scaleX(1.1675);">29/11/2021</div>
<div class="t" style="left:770.50px;top:754.77px;font-size:11.5px;color:#7a7a7a;transform:scaleX(1.1501);">22/04/2022</div>
<div class="t" style="left:886.70px;top:754.77px;font-size:11.5px;color:#7a7a7a;transform:scaleX(1.1501);">15/09/2022</div>
<div class="t" style="left:1006.20px;top:754.77px;font-size:11.5px;color:#7a7a7a;transform:scaleX(1.1647);">8/02/2023</div>
<div class="t" style="left:1122.40px;top:754.77px;font-size:11.5px;color:#7a7a7a;transform:scaleX(1.1647);">5/07/2023</div>
<div class="t" style="left:1235.30px;top:754.77px;font-size:11.5px;color:#7a7a7a;transform:scaleX(1.1675);">24/11/2023</div>
<div class="t" style="left:1351.50px;top:754.77px;font-size:11.5px;color:#7a7a7a;transform:scaleX(1.1501);">19/04/2024</div>
<div class="a" style="left:264.6px;top:796px;width:17.4px;height:13px;background:#007800"></div>
<div class="t" style="left:288.30px;top:796.34px;font-size:12px;color:#505050;transform:scaleX(1.0162);">Equity</div>
<div class="a" style="left:391.8px;top:796px;width:17.4px;height:13px;background:#00c000"></div>
<div class="t" style="left:415.30px;top:796.34px;font-size:12px;color:#505050;transform:scaleX(0.9281);">Cash</div>
<div class="a" style="left:518.6px;top:796px;width:17.4px;height:13px;background:#4060a0"></div>
<div class="t" style="left:542.00px;top:796.34px;font-size:12px;color:#505050;transform:scaleX(1.0161);">Open Positions</div>
<div class="a" style="left:645.0px;top:801px;width:18.4px;height:2px;background:#606060"></div>
<div class="t" style="left:669.00px;top:796.34px;font-size:12px;color:#505050;transform:scaleX(1.0378);">Benchmark</div>
<div class="a" style="left:771.5px;top:801px;width:18.4px;height:2px;background:#7373f0"></div>
<div class="t" style="left:796.00px;top:796.34px;font-size:12px;color:#505050;transform:scaleX(0.9961);">Long</div>
<div class="a" style="left:898.6px;top:801px;width:18.4px;height:2px;background:#f07a70"></div>
<div class="t" style="left:922.80px;top:796.34px;font-size:12px;color:#505050;transform:scaleX(1.0527);">Short</div>
<div class="a" style="left:1025.8px;top:801px;width:18.4px;height:2px;background:#7373f0"></div>
<div class="t" style="left:1049.60px;top:796.34px;font-size:12px;color:#505050;transform:scaleX(1.0392);">Mov. Average</div>
<div class="a" style="left:1152.7px;top:801px;width:18.4px;height:2px;background:#60a860"></div>
<div class="t" style="left:1176.80px;top:796.34px;font-size:12px;color:#505050;transform:scaleX(1.0223);">Closed Equity</div>
<div class="a" style="left:7px;top:840px;width:1492px;height:54px;background:#d5ebf4"></div>
<div class="a" style="left:329px;top:842px;width:1162px;height:50px;background:#f8f8f8;border:1px solid #a0a0a0"></div>
<div class="t" style="left:334.00px;top:847.64px;font-size:12px;transform:scaleX(0.9611);">URNM</div>
<div class="t" style="left:16.50px;top:844.34px;font-size:12px;transform:scaleX(0.9098);">Date:</div>
<div class="t" style="left:16.50px;top:862.24px;font-size:12px;transform:scaleX(0.9567);">Equity:</div>
<div class="t" style="left:16.50px;top:880.04px;font-size:12px;transform:scaleX(0.8769);">Cash:</div>
<div class="t" style="left:144.50px;top:844.34px;font-size:12px;transform:scaleX(1.0054);">Holdings:</div>
<div class="t" style="left:144.50px;top:862.24px;font-size:12px;transform:scaleX(0.9309);">Exposure:</div>
<div class="t" style="left:144.50px;top:880.04px;font-size:12px;transform:scaleX(0.9883);">Corr w/Benchmark:</div>
<div class="t" style="left:75.00px;top:844.34px;font-size:12px;transform:scaleX(0.9740);">2/01/2020</div>
<div class="t" style="left:73.20px;top:862.24px;font-size:12px;color:#128412;transform:scaleX(0.8957);">102.282,57</div>
<div class="t" style="left:107.00px;top:880.04px;font-size:12px;color:#128412;transform:scaleX(0.8990);">6,28</div>
<div class="t" style="left:306.00px;top:844.34px;font-size:12px;transform:scaleX(0.8075);">1</div>
<div class="t" style="left:276.00px;top:862.24px;font-size:12px;transform:scaleX(0.9090);">99,99%</div>
<div class="a" style="left:0;top:903px;width:1503px;height:22px;background:#f4f4f4;border-top:1px solid #a8a8a8"></div>
<div class="a" style="left:0;top:925px;width:1503px;height:3px;background:#b0c4de"></div>
<div class="t" style="left:2.70px;top:908.34px;font-size:12px;transform:scaleX(0.9582);">1 Symbol(s) Loaded</div>
<div class="t" style="left:188.20px;top:908.34px;font-size:12px;color:#128412;transform:scaleX(0.9800);">Backtest Complete</div>
<div class="sep" style="left:295px;top:907px;height:15px;background:#c5d5e5"></div>
<div class="a" style="left:386px;top:908px;width:89px;height:12.5px;background:#f2f23a"></div>
<div class="t" style="left:304.20px;top:908.34px;font-size:12px;transform:scaleX(1.0114);">Profit:</div>
<div class="t" style="left:340.10px;top:908.34px;font-size:12px;color:#128412;transform:scaleX(0.9046);">7.017.281,70 151,93% APR</div>
<div class="sep" style="left:483px;top:907px;height:15px;background:#c5d5e5"></div>
<div class="t" style="left:492.50px;top:908.34px;font-size:12px;transform:scaleX(0.9803);">Benchmark Profit:</div>
<div class="t" style="left:591.30px;top:908.34px;font-size:12px;color:#128412;transform:scaleX(0.9107);">351.723,24 38,63% APR</div>
</div></body></html>
